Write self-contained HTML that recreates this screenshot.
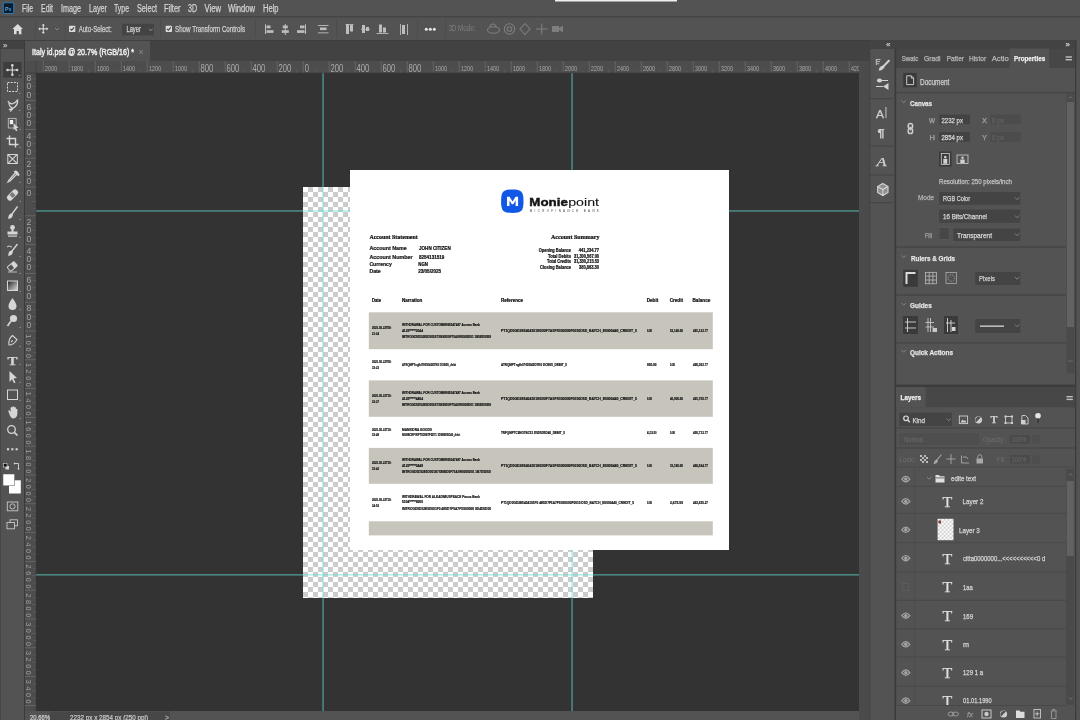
<!DOCTYPE html>
<html><head><meta charset="utf-8"><style>
html,body{margin:0;padding:0;width:1080px;height:720px;overflow:hidden;background:#535353}
svg{display:block;filter:blur(0.35px)}
text{font-family:"Liberation Sans",sans-serif}
</style></head><body>
<svg width="1080" height="720" viewBox="0 0 1080 720">
<rect x="0" y="0" width="1080" height="720" fill="#535353" />
<rect x="0" y="0" width="1080" height="16" fill="#535353" />
<rect x="0" y="16" width="1080" height="1.5" fill="#454545" />
<rect x="555" y="0" width="122" height="1.5" fill="#f0f0f0" />
<rect x="3.2" y="2.7" width="10.6" height="10.8" rx="1.5" fill="#0b1d2c" stroke="#2f79b5" stroke-width="1.1"/>
<text x="5" y="10.8" font-size="6" fill="#4fa6e8" textLength="6.6" lengthAdjust="spacingAndGlyphs" font-weight="bold" >Ps</text>
<text x="22" y="12" font-size="10" fill="#d4d4d4" stroke="#d4d4d4" stroke-width="0.25" textLength="11" lengthAdjust="spacingAndGlyphs" >File</text>
<text x="41" y="12" font-size="10" fill="#d4d4d4" stroke="#d4d4d4" stroke-width="0.25" textLength="12" lengthAdjust="spacingAndGlyphs" >Edit</text>
<text x="61" y="12" font-size="10" fill="#d4d4d4" stroke="#d4d4d4" stroke-width="0.25" textLength="20" lengthAdjust="spacingAndGlyphs" >Image</text>
<text x="89" y="12" font-size="10" fill="#d4d4d4" stroke="#d4d4d4" stroke-width="0.25" textLength="18" lengthAdjust="spacingAndGlyphs" >Layer</text>
<text x="114" y="12" font-size="10" fill="#d4d4d4" stroke="#d4d4d4" stroke-width="0.25" textLength="15" lengthAdjust="spacingAndGlyphs" >Type</text>
<text x="137" y="12" font-size="10" fill="#d4d4d4" stroke="#d4d4d4" stroke-width="0.25" textLength="20" lengthAdjust="spacingAndGlyphs" >Select</text>
<text x="164" y="12" font-size="10" fill="#d4d4d4" stroke="#d4d4d4" stroke-width="0.25" textLength="16.5" lengthAdjust="spacingAndGlyphs" >Filter</text>
<text x="188" y="12" font-size="10" fill="#d4d4d4" stroke="#d4d4d4" stroke-width="0.25" textLength="9" lengthAdjust="spacingAndGlyphs" >3D</text>
<text x="204.5" y="12" font-size="10" fill="#d4d4d4" stroke="#d4d4d4" stroke-width="0.25" textLength="16.5" lengthAdjust="spacingAndGlyphs" >View</text>
<text x="228" y="12" font-size="10" fill="#d4d4d4" stroke="#d4d4d4" stroke-width="0.25" textLength="27" lengthAdjust="spacingAndGlyphs" >Window</text>
<text x="263" y="12" font-size="10" fill="#d4d4d4" stroke="#d4d4d4" stroke-width="0.25" textLength="15.5" lengthAdjust="spacingAndGlyphs" >Help</text>
<rect x="0" y="40" width="1080" height="21" fill="#424242" />
<rect x="25" y="40" width="125" height="21" fill="#535353" />
<text x="32" y="55" font-size="9.5" fill="#ececec" stroke="#ececec" stroke-width="0.5" textLength="102" lengthAdjust="spacingAndGlyphs" >Italy id.psd @ 20.7% (RGB/16) *</text>
<text x="138.5" y="54.5" font-size="9" fill="#8a8a8a" >×</text>
<rect x="25" y="61" width="834" height="12" fill="#4d4d4d" />
<rect x="25" y="73" width="11" height="638" fill="#4d4d4d" />
<rect x="36" y="73" width="823" height="638" fill="#333333" />
<rect x="859" y="61" width="11" height="659" fill="#4a4a4a" />
<rect x="25" y="711" width="834" height="9" fill="#535353" />
<rect x="0" y="40" width="24" height="680" fill="#535353" />
<rect x="0" y="40" width="24" height="9" fill="#424242" />
<rect x="24" y="40" width="1" height="680" fill="#3a3a3a" />
<rect x="0" y="49" width="1" height="671" fill="#464646" />
<rect x="870" y="40" width="25" height="9" fill="#424242" />
<rect x="870" y="49" width="25" height="671" fill="#535353" />
<rect x="895" y="40" width="185" height="9" fill="#424242" />
<rect x="895" y="49" width="1" height="671" fill="#3a3a3a" />
<rect x="1075" y="40" width="1" height="680" fill="#3a3a3a" />
<defs><pattern id="chk" x="303" y="187" width="10" height="10" patternUnits="userSpaceOnUse"><rect width="10" height="10" fill="#fff"/><rect x="5" y="0" width="5" height="5" fill="#cccccc"/><rect x="0" y="5" width="5" height="5" fill="#cccccc"/></pattern></defs>
<rect x="303" y="187" width="290" height="411" fill="url(#chk)" />
<rect x="322.4" y="73" width="1.3" height="638" fill="rgba(100,225,210,0.6)" />
<rect x="571.4" y="73" width="1.3" height="638" fill="rgba(100,225,210,0.6)" />
<rect x="36" y="210.3" width="823" height="1.3" fill="rgba(100,225,210,0.6)" />
<rect x="36" y="574.2" width="823" height="1.3" fill="rgba(100,225,210,0.6)" />
<rect x="350" y="170" width="379" height="380" fill="#ffffff" />
<path d="M17.7 24 L12.4 29 L14 29 L14 34.3 L16.6 34.3 L16.6 31 L18.8 31 L18.8 34.3 L21.4 34.3 L21.4 29 L23 29 Z" fill="#dcdcdc"/>
<rect x="35" y="19" width="1" height="19" fill="#4c4c4c" />
<g stroke="#dcdcdc" stroke-width="1.1" fill="none"><line x1="43.3" y1="24.5" x2="43.3" y2="33.2"/><line x1="39" y1="28.8" x2="47.6" y2="28.8"/></g>
<g fill="#dcdcdc"><path d="M43.3 23.8 l-1.6 1.8 h3.2z"/><path d="M43.3 33.8 l-1.6 -1.8 h3.2z"/><path d="M38.3 28.8 l1.8 -1.6 v3.2z"/><path d="M48.3 28.8 l-1.8 -1.6 v3.2z"/></g>
<path d="M55 28 L57 30 L59 28" stroke="#8c8c8c" stroke-width="0.9" fill="none"/>
<rect x="65" y="19" width="1" height="19" fill="#4c4c4c" />
<rect x="69" y="25.7" width="6.3" height="6.3" rx="0.8" fill="#dcdcdc"/>
<path d="M70.3 28.9 L71.7 30.299999999999997 L74.1 27.3" stroke="#3c3c3c" stroke-width="1.1" fill="none"/>
<text x="78.7" y="31.8" font-size="8.5" fill="#d0d0d0" stroke="#d0d0d0" stroke-width="0.25" textLength="33" lengthAdjust="spacingAndGlyphs" >Auto-Select:</text>
<rect x="122" y="23.7" width="32" height="11.7" fill="#444444" />
<text x="126.5" y="31.8" font-size="8.5" fill="#d8d8d8" stroke="#d8d8d8" stroke-width="0.25" textLength="14.3" lengthAdjust="spacingAndGlyphs" >Layer</text>
<path d="M149 28.8 L150.8 30.6 L152.6 28.8" stroke="#9a9a9a" stroke-width="0.9" fill="none"/>
<rect x="160" y="19" width="1" height="19" fill="#4c4c4c" />
<rect x="165.7" y="25.7" width="6.3" height="6.3" rx="0.8" fill="#dcdcdc"/>
<path d="M167.0 28.9 L168.39999999999998 30.299999999999997 L170.79999999999998 27.3" stroke="#3c3c3c" stroke-width="1.1" fill="none"/>
<text x="175" y="31.8" font-size="8.5" fill="#d0d0d0" stroke="#d0d0d0" stroke-width="0.25" textLength="70" lengthAdjust="spacingAndGlyphs" >Show Transform Controls</text>
<rect x="255" y="19" width="1" height="19" fill="#4c4c4c" />
<rect x="265" y="24.3" width="1" height="9.7" fill="#bdbdbd" />
<rect x="266.5" y="25.5" width="4" height="2.8" fill="#bdbdbd" />
<rect x="266.5" y="30.2" width="7" height="2.7" fill="#bdbdbd" />
<rect x="284.8" y="24" width="1" height="11" fill="#bdbdbd" />
<rect x="282.8" y="25.5" width="5" height="2.8" fill="#bdbdbd" />
<rect x="281.8" y="30.2" width="7" height="2.7" fill="#bdbdbd" />
<rect x="305" y="24.3" width="1" height="9.7" fill="#bdbdbd" />
<rect x="300" y="25.5" width="4.5" height="2.8" fill="#bdbdbd" />
<rect x="297" y="30.2" width="7.5" height="2.7" fill="#bdbdbd" />
<rect x="318" y="25" width="10.5" height="0.9" fill="#bdbdbd" />
<rect x="318" y="32.4" width="10.5" height="0.9" fill="#bdbdbd" />
<rect x="320" y="27.5" width="6.5" height="2.6" fill="#bdbdbd" />
<rect x="336" y="19" width="1" height="19" fill="#4c4c4c" />
<rect x="346" y="24" width="3" height="10" fill="#bdbdbd" />
<rect x="350" y="25" width="3" height="6.5" fill="#bdbdbd" />
<rect x="345.5" y="24" width="8" height="0.8" fill="#bdbdbd" />
<rect x="362" y="25" width="3" height="8" fill="#bdbdbd" />
<rect x="366" y="27" width="3" height="4" fill="#bdbdbd" />
<rect x="361" y="28.8" width="9" height="0.8" fill="#bdbdbd" />
<rect x="379" y="24.5" width="3" height="8" fill="#bdbdbd" />
<rect x="383" y="27.5" width="3" height="5" fill="#bdbdbd" />
<rect x="376.5" y="33" width="12" height="0.9" fill="#bdbdbd" />
<rect x="400" y="24" width="0.9" height="11" fill="#bdbdbd" />
<rect x="407" y="24" width="0.9" height="11" fill="#bdbdbd" />
<rect x="402" y="25" width="3" height="9" fill="#bdbdbd" />
<rect x="417" y="19" width="1" height="19" fill="#4c4c4c" />
<circle cx="426.3" cy="29.3" r="1.5" fill="#e8e8e8"/>
<circle cx="430.3" cy="29.3" r="1.5" fill="#e8e8e8"/>
<circle cx="434.3" cy="29.3" r="1.5" fill="#e8e8e8"/>
<rect x="445" y="19" width="1" height="19" fill="#4c4c4c" />
<text x="448.4" y="31.2" font-size="8.5" fill="#7e7e7e" textLength="27" lengthAdjust="spacingAndGlyphs" >3D Mode:</text>
<g stroke="#7e7e7e" stroke-width="1.1" fill="none"><ellipse cx="493.5" cy="30" rx="6" ry="3.2"/><path d="M490 27 a3 3 0 0 1 6 0"/><circle cx="509.5" cy="29" r="5.2"/><circle cx="509.5" cy="29" r="2.3"/><path d="M525 23.5 L530 29 L525 34.5 L520 29 Z"/><line x1="541.7" y1="23.5" x2="541.7" y2="34.5"/><line x1="536" y1="29" x2="547.5" y2="29"/></g>
<path d="M552 26 h7 v6 h-7 z M559 28 l4 -2.5 v7 l-4 -2.5z" fill="#7e7e7e"/>
<rect x="0" y="40" width="1080" height="0.8" fill="#3c3c3c" />
<rect x="42.80000000000001" y="61" width="0.8" height="12" fill="#6a6a6a" />
<rect x="49.40000000000001" y="70.5" width="0.7" height="2.5" fill="#626262" />
<rect x="55.90000000000001" y="69" width="0.7" height="4" fill="#626262" />
<rect x="62.40000000000001" y="70.5" width="0.7" height="2.5" fill="#626262" />
<text x="44.90000000000001" y="70.6" font-size="7.2" fill="#aaaaaa" textLength="12" lengthAdjust="spacingAndGlyphs" >2000</text>
<rect x="68.80000000000001" y="61" width="0.8" height="12" fill="#6a6a6a" />
<rect x="75.4" y="70.5" width="0.7" height="2.5" fill="#626262" />
<rect x="81.9" y="69" width="0.7" height="4" fill="#626262" />
<rect x="88.4" y="70.5" width="0.7" height="2.5" fill="#626262" />
<text x="70.9" y="70.6" font-size="7.2" fill="#aaaaaa" textLength="12" lengthAdjust="spacingAndGlyphs" >1800</text>
<rect x="94.80000000000001" y="61" width="0.8" height="12" fill="#6a6a6a" />
<rect x="101.4" y="70.5" width="0.7" height="2.5" fill="#626262" />
<rect x="107.9" y="69" width="0.7" height="4" fill="#626262" />
<rect x="114.4" y="70.5" width="0.7" height="2.5" fill="#626262" />
<text x="96.9" y="70.6" font-size="7.2" fill="#aaaaaa" textLength="12" lengthAdjust="spacingAndGlyphs" >1600</text>
<rect x="120.80000000000001" y="61" width="0.8" height="12" fill="#6a6a6a" />
<rect x="127.4" y="70.5" width="0.7" height="2.5" fill="#626262" />
<rect x="133.9" y="69" width="0.7" height="4" fill="#626262" />
<rect x="140.4" y="70.5" width="0.7" height="2.5" fill="#626262" />
<text x="122.9" y="70.6" font-size="7.2" fill="#aaaaaa" textLength="12" lengthAdjust="spacingAndGlyphs" >1400</text>
<rect x="146.8" y="61" width="0.8" height="12" fill="#6a6a6a" />
<rect x="153.4" y="70.5" width="0.7" height="2.5" fill="#626262" />
<rect x="159.9" y="69" width="0.7" height="4" fill="#626262" />
<rect x="166.4" y="70.5" width="0.7" height="2.5" fill="#626262" />
<text x="148.9" y="70.6" font-size="7.2" fill="#aaaaaa" textLength="12" lengthAdjust="spacingAndGlyphs" >1200</text>
<rect x="172.8" y="61" width="0.8" height="12" fill="#6a6a6a" />
<rect x="179.4" y="70.5" width="0.7" height="2.5" fill="#626262" />
<rect x="185.9" y="69" width="0.7" height="4" fill="#626262" />
<rect x="192.4" y="70.5" width="0.7" height="2.5" fill="#626262" />
<text x="174.9" y="70.6" font-size="7.2" fill="#aaaaaa" textLength="12" lengthAdjust="spacingAndGlyphs" >1000</text>
<rect x="198.8" y="61" width="0.8" height="12" fill="#6a6a6a" />
<rect x="205.4" y="70.5" width="0.7" height="2.5" fill="#626262" />
<rect x="211.9" y="69" width="0.7" height="4" fill="#626262" />
<rect x="218.4" y="70.5" width="0.7" height="2.5" fill="#626262" />
<text x="200.5" y="71.5" font-size="10" fill="#aaaaaa" textLength="12.8" lengthAdjust="spacingAndGlyphs" >800</text>
<rect x="224.8" y="61" width="0.8" height="12" fill="#6a6a6a" />
<rect x="231.4" y="70.5" width="0.7" height="2.5" fill="#626262" />
<rect x="237.9" y="69" width="0.7" height="4" fill="#626262" />
<rect x="244.4" y="70.5" width="0.7" height="2.5" fill="#626262" />
<text x="226.5" y="71.5" font-size="10" fill="#aaaaaa" textLength="12.8" lengthAdjust="spacingAndGlyphs" >600</text>
<rect x="250.8" y="61" width="0.8" height="12" fill="#6a6a6a" />
<rect x="257.40000000000003" y="70.5" width="0.7" height="2.5" fill="#626262" />
<rect x="263.90000000000003" y="69" width="0.7" height="4" fill="#626262" />
<rect x="270.40000000000003" y="70.5" width="0.7" height="2.5" fill="#626262" />
<text x="252.5" y="71.5" font-size="10" fill="#aaaaaa" textLength="12.8" lengthAdjust="spacingAndGlyphs" >400</text>
<rect x="276.8" y="61" width="0.8" height="12" fill="#6a6a6a" />
<rect x="283.40000000000003" y="70.5" width="0.7" height="2.5" fill="#626262" />
<rect x="289.90000000000003" y="69" width="0.7" height="4" fill="#626262" />
<rect x="296.40000000000003" y="70.5" width="0.7" height="2.5" fill="#626262" />
<text x="278.5" y="71.5" font-size="10" fill="#aaaaaa" textLength="12.8" lengthAdjust="spacingAndGlyphs" >200</text>
<rect x="302.8" y="61" width="0.8" height="12" fill="#6a6a6a" />
<rect x="309.40000000000003" y="70.5" width="0.7" height="2.5" fill="#626262" />
<rect x="315.90000000000003" y="69" width="0.7" height="4" fill="#626262" />
<rect x="322.40000000000003" y="70.5" width="0.7" height="2.5" fill="#626262" />
<text x="304.8" y="71.5" font-size="10" fill="#aaaaaa" textLength="4.2" lengthAdjust="spacingAndGlyphs" >0</text>
<rect x="328.8" y="61" width="0.8" height="12" fill="#6a6a6a" />
<rect x="335.40000000000003" y="70.5" width="0.7" height="2.5" fill="#626262" />
<rect x="341.90000000000003" y="69" width="0.7" height="4" fill="#626262" />
<rect x="348.40000000000003" y="70.5" width="0.7" height="2.5" fill="#626262" />
<text x="330.5" y="71.5" font-size="10" fill="#aaaaaa" textLength="12.8" lengthAdjust="spacingAndGlyphs" >200</text>
<rect x="354.8" y="61" width="0.8" height="12" fill="#6a6a6a" />
<rect x="361.40000000000003" y="70.5" width="0.7" height="2.5" fill="#626262" />
<rect x="367.90000000000003" y="69" width="0.7" height="4" fill="#626262" />
<rect x="374.40000000000003" y="70.5" width="0.7" height="2.5" fill="#626262" />
<text x="356.5" y="71.5" font-size="10" fill="#aaaaaa" textLength="12.8" lengthAdjust="spacingAndGlyphs" >400</text>
<rect x="380.8" y="61" width="0.8" height="12" fill="#6a6a6a" />
<rect x="387.40000000000003" y="70.5" width="0.7" height="2.5" fill="#626262" />
<rect x="393.90000000000003" y="69" width="0.7" height="4" fill="#626262" />
<rect x="400.40000000000003" y="70.5" width="0.7" height="2.5" fill="#626262" />
<text x="382.5" y="71.5" font-size="10" fill="#aaaaaa" textLength="12.8" lengthAdjust="spacingAndGlyphs" >600</text>
<rect x="406.8" y="61" width="0.8" height="12" fill="#6a6a6a" />
<rect x="413.40000000000003" y="70.5" width="0.7" height="2.5" fill="#626262" />
<rect x="419.90000000000003" y="69" width="0.7" height="4" fill="#626262" />
<rect x="426.40000000000003" y="70.5" width="0.7" height="2.5" fill="#626262" />
<text x="408.5" y="71.5" font-size="10" fill="#aaaaaa" textLength="12.8" lengthAdjust="spacingAndGlyphs" >800</text>
<rect x="432.8" y="61" width="0.8" height="12" fill="#6a6a6a" />
<rect x="439.40000000000003" y="70.5" width="0.7" height="2.5" fill="#626262" />
<rect x="445.90000000000003" y="69" width="0.7" height="4" fill="#626262" />
<rect x="452.40000000000003" y="70.5" width="0.7" height="2.5" fill="#626262" />
<text x="434.90000000000003" y="70.6" font-size="7.2" fill="#aaaaaa" textLength="12" lengthAdjust="spacingAndGlyphs" >1000</text>
<rect x="458.8" y="61" width="0.8" height="12" fill="#6a6a6a" />
<rect x="465.40000000000003" y="70.5" width="0.7" height="2.5" fill="#626262" />
<rect x="471.90000000000003" y="69" width="0.7" height="4" fill="#626262" />
<rect x="478.40000000000003" y="70.5" width="0.7" height="2.5" fill="#626262" />
<text x="460.90000000000003" y="70.6" font-size="7.2" fill="#aaaaaa" textLength="12" lengthAdjust="spacingAndGlyphs" >1200</text>
<rect x="484.8" y="61" width="0.8" height="12" fill="#6a6a6a" />
<rect x="491.40000000000003" y="70.5" width="0.7" height="2.5" fill="#626262" />
<rect x="497.90000000000003" y="69" width="0.7" height="4" fill="#626262" />
<rect x="504.40000000000003" y="70.5" width="0.7" height="2.5" fill="#626262" />
<text x="486.90000000000003" y="70.6" font-size="7.2" fill="#aaaaaa" textLength="12" lengthAdjust="spacingAndGlyphs" >1400</text>
<rect x="510.8" y="61" width="0.8" height="12" fill="#6a6a6a" />
<rect x="517.4" y="70.5" width="0.7" height="2.5" fill="#626262" />
<rect x="523.9" y="69" width="0.7" height="4" fill="#626262" />
<rect x="530.4" y="70.5" width="0.7" height="2.5" fill="#626262" />
<text x="512.9" y="70.6" font-size="7.2" fill="#aaaaaa" textLength="12" lengthAdjust="spacingAndGlyphs" >1600</text>
<rect x="536.8" y="61" width="0.8" height="12" fill="#6a6a6a" />
<rect x="543.4" y="70.5" width="0.7" height="2.5" fill="#626262" />
<rect x="549.9" y="69" width="0.7" height="4" fill="#626262" />
<rect x="556.4" y="70.5" width="0.7" height="2.5" fill="#626262" />
<text x="538.9" y="70.6" font-size="7.2" fill="#aaaaaa" textLength="12" lengthAdjust="spacingAndGlyphs" >1800</text>
<rect x="562.8" y="61" width="0.8" height="12" fill="#6a6a6a" />
<rect x="569.4" y="70.5" width="0.7" height="2.5" fill="#626262" />
<rect x="575.9" y="69" width="0.7" height="4" fill="#626262" />
<rect x="582.4" y="70.5" width="0.7" height="2.5" fill="#626262" />
<text x="564.9" y="70.6" font-size="7.2" fill="#aaaaaa" textLength="12" lengthAdjust="spacingAndGlyphs" >2000</text>
<rect x="588.8" y="61" width="0.8" height="12" fill="#6a6a6a" />
<rect x="595.4" y="70.5" width="0.7" height="2.5" fill="#626262" />
<rect x="601.9" y="69" width="0.7" height="4" fill="#626262" />
<rect x="608.4" y="70.5" width="0.7" height="2.5" fill="#626262" />
<text x="590.9" y="70.6" font-size="7.2" fill="#aaaaaa" textLength="12" lengthAdjust="spacingAndGlyphs" >2200</text>
<rect x="614.8" y="61" width="0.8" height="12" fill="#6a6a6a" />
<rect x="621.4" y="70.5" width="0.7" height="2.5" fill="#626262" />
<rect x="627.9" y="69" width="0.7" height="4" fill="#626262" />
<rect x="634.4" y="70.5" width="0.7" height="2.5" fill="#626262" />
<text x="616.9" y="70.6" font-size="7.2" fill="#aaaaaa" textLength="12" lengthAdjust="spacingAndGlyphs" >2400</text>
<rect x="640.8" y="61" width="0.8" height="12" fill="#6a6a6a" />
<rect x="647.4" y="70.5" width="0.7" height="2.5" fill="#626262" />
<rect x="653.9" y="69" width="0.7" height="4" fill="#626262" />
<rect x="660.4" y="70.5" width="0.7" height="2.5" fill="#626262" />
<text x="642.9" y="70.6" font-size="7.2" fill="#aaaaaa" textLength="12" lengthAdjust="spacingAndGlyphs" >2600</text>
<rect x="666.8" y="61" width="0.8" height="12" fill="#6a6a6a" />
<rect x="673.4" y="70.5" width="0.7" height="2.5" fill="#626262" />
<rect x="679.9" y="69" width="0.7" height="4" fill="#626262" />
<rect x="686.4" y="70.5" width="0.7" height="2.5" fill="#626262" />
<text x="668.9" y="70.6" font-size="7.2" fill="#aaaaaa" textLength="12" lengthAdjust="spacingAndGlyphs" >2800</text>
<rect x="692.8" y="61" width="0.8" height="12" fill="#6a6a6a" />
<rect x="699.4" y="70.5" width="0.7" height="2.5" fill="#626262" />
<rect x="705.9" y="69" width="0.7" height="4" fill="#626262" />
<rect x="712.4" y="70.5" width="0.7" height="2.5" fill="#626262" />
<text x="694.9" y="70.6" font-size="7.2" fill="#aaaaaa" textLength="12" lengthAdjust="spacingAndGlyphs" >3000</text>
<rect x="718.8" y="61" width="0.8" height="12" fill="#6a6a6a" />
<rect x="725.4" y="70.5" width="0.7" height="2.5" fill="#626262" />
<rect x="731.9" y="69" width="0.7" height="4" fill="#626262" />
<rect x="738.4" y="70.5" width="0.7" height="2.5" fill="#626262" />
<text x="720.9" y="70.6" font-size="7.2" fill="#aaaaaa" textLength="12" lengthAdjust="spacingAndGlyphs" >3200</text>
<rect x="744.8" y="61" width="0.8" height="12" fill="#6a6a6a" />
<rect x="751.4" y="70.5" width="0.7" height="2.5" fill="#626262" />
<rect x="757.9" y="69" width="0.7" height="4" fill="#626262" />
<rect x="764.4" y="70.5" width="0.7" height="2.5" fill="#626262" />
<text x="746.9" y="70.6" font-size="7.2" fill="#aaaaaa" textLength="12" lengthAdjust="spacingAndGlyphs" >3400</text>
<rect x="770.8" y="61" width="0.8" height="12" fill="#6a6a6a" />
<rect x="777.4" y="70.5" width="0.7" height="2.5" fill="#626262" />
<rect x="783.9" y="69" width="0.7" height="4" fill="#626262" />
<rect x="790.4" y="70.5" width="0.7" height="2.5" fill="#626262" />
<text x="772.9" y="70.6" font-size="7.2" fill="#aaaaaa" textLength="12" lengthAdjust="spacingAndGlyphs" >3600</text>
<rect x="796.8" y="61" width="0.8" height="12" fill="#6a6a6a" />
<rect x="803.4" y="70.5" width="0.7" height="2.5" fill="#626262" />
<rect x="809.9" y="69" width="0.7" height="4" fill="#626262" />
<rect x="816.4" y="70.5" width="0.7" height="2.5" fill="#626262" />
<text x="798.9" y="70.6" font-size="7.2" fill="#aaaaaa" textLength="12" lengthAdjust="spacingAndGlyphs" >3800</text>
<rect x="822.8" y="61" width="0.8" height="12" fill="#6a6a6a" />
<rect x="829.4" y="70.5" width="0.7" height="2.5" fill="#626262" />
<rect x="835.9" y="69" width="0.7" height="4" fill="#626262" />
<rect x="842.4" y="70.5" width="0.7" height="2.5" fill="#626262" />
<text x="824.9" y="70.6" font-size="7.2" fill="#aaaaaa" textLength="12" lengthAdjust="spacingAndGlyphs" >4000</text>
<rect x="848.8" y="61" width="0.8" height="12" fill="#6a6a6a" />
<rect x="855.4" y="70.5" width="0.7" height="2.5" fill="#626262" />
<text x="850.9" y="70.6" font-size="7.2" fill="#aaaaaa" textLength="12" lengthAdjust="spacingAndGlyphs" >4200</text>
<rect x="25" y="72.6" width="834" height="0.6" fill="#3e3e3e" />
<rect x="35.6" y="61" width="0.6" height="650" fill="#3e3e3e" />
<rect x="33.5" y="78.65" width="2.5" height="0.7" fill="#626262" />
<rect x="32" y="85.85000000000001" width="4" height="0.7" fill="#626262" />
<rect x="33.5" y="93.05000000000001" width="2.5" height="0.7" fill="#626262" />
<text x="26.4" y="81.0" font-size="8.4" fill="#a6a6a6" textLength="4.8" lengthAdjust="spacingAndGlyphs" >8</text>
<text x="26.4" y="89.3" font-size="8.4" fill="#a6a6a6" textLength="4.8" lengthAdjust="spacingAndGlyphs" >0</text>
<text x="26.4" y="97.6" font-size="8.4" fill="#a6a6a6" textLength="4.8" lengthAdjust="spacingAndGlyphs" >0</text>
<rect x="25" y="100.19999999999999" width="11" height="0.8" fill="#6a6a6a" />
<rect x="33.5" y="107.45" width="2.5" height="0.7" fill="#626262" />
<rect x="32" y="114.65" width="4" height="0.7" fill="#626262" />
<rect x="33.5" y="121.85" width="2.5" height="0.7" fill="#626262" />
<text x="26.4" y="109.8" font-size="8.4" fill="#a6a6a6" textLength="4.8" lengthAdjust="spacingAndGlyphs" >6</text>
<text x="26.4" y="118.1" font-size="8.4" fill="#a6a6a6" textLength="4.8" lengthAdjust="spacingAndGlyphs" >0</text>
<text x="26.4" y="126.4" font-size="8.4" fill="#a6a6a6" textLength="4.8" lengthAdjust="spacingAndGlyphs" >0</text>
<rect x="25" y="129.0" width="11" height="0.8" fill="#6a6a6a" />
<rect x="33.5" y="136.25" width="2.5" height="0.7" fill="#626262" />
<rect x="32" y="143.45000000000002" width="4" height="0.7" fill="#626262" />
<rect x="33.5" y="150.65" width="2.5" height="0.7" fill="#626262" />
<text x="26.4" y="138.6" font-size="8.4" fill="#a6a6a6" textLength="4.8" lengthAdjust="spacingAndGlyphs" >4</text>
<text x="26.4" y="146.9" font-size="8.4" fill="#a6a6a6" textLength="4.8" lengthAdjust="spacingAndGlyphs" >0</text>
<text x="26.4" y="155.2" font-size="8.4" fill="#a6a6a6" textLength="4.8" lengthAdjust="spacingAndGlyphs" >0</text>
<rect x="25" y="157.79999999999998" width="11" height="0.8" fill="#6a6a6a" />
<rect x="33.5" y="165.04999999999998" width="2.5" height="0.7" fill="#626262" />
<rect x="32" y="172.25" width="4" height="0.7" fill="#626262" />
<rect x="33.5" y="179.45" width="2.5" height="0.7" fill="#626262" />
<text x="26.4" y="167.39999999999998" font-size="8.4" fill="#a6a6a6" textLength="4.8" lengthAdjust="spacingAndGlyphs" >2</text>
<text x="26.4" y="175.7" font-size="8.4" fill="#a6a6a6" textLength="4.8" lengthAdjust="spacingAndGlyphs" >0</text>
<text x="26.4" y="183.99999999999997" font-size="8.4" fill="#a6a6a6" textLength="4.8" lengthAdjust="spacingAndGlyphs" >0</text>
<rect x="25" y="186.6" width="11" height="0.8" fill="#6a6a6a" />
<rect x="33.5" y="193.85" width="2.5" height="0.7" fill="#626262" />
<rect x="32" y="201.05" width="4" height="0.7" fill="#626262" />
<rect x="33.5" y="208.25" width="2.5" height="0.7" fill="#626262" />
<text x="26.4" y="196.2" font-size="8.4" fill="#a6a6a6" textLength="4.8" lengthAdjust="spacingAndGlyphs" >0</text>
<rect x="25" y="215.4" width="11" height="0.8" fill="#6a6a6a" />
<rect x="33.5" y="222.65" width="2.5" height="0.7" fill="#626262" />
<rect x="32" y="229.85000000000002" width="4" height="0.7" fill="#626262" />
<rect x="33.5" y="237.05" width="2.5" height="0.7" fill="#626262" />
<text x="26.4" y="225.0" font-size="8.4" fill="#a6a6a6" textLength="4.8" lengthAdjust="spacingAndGlyphs" >2</text>
<text x="26.4" y="233.3" font-size="8.4" fill="#a6a6a6" textLength="4.8" lengthAdjust="spacingAndGlyphs" >0</text>
<text x="26.4" y="241.6" font-size="8.4" fill="#a6a6a6" textLength="4.8" lengthAdjust="spacingAndGlyphs" >0</text>
<rect x="25" y="244.2" width="11" height="0.8" fill="#6a6a6a" />
<rect x="33.5" y="251.45" width="2.5" height="0.7" fill="#626262" />
<rect x="32" y="258.65" width="4" height="0.7" fill="#626262" />
<rect x="33.5" y="265.84999999999997" width="2.5" height="0.7" fill="#626262" />
<text x="26.4" y="253.79999999999998" font-size="8.4" fill="#a6a6a6" textLength="4.8" lengthAdjust="spacingAndGlyphs" >4</text>
<text x="26.4" y="262.09999999999997" font-size="8.4" fill="#a6a6a6" textLength="4.8" lengthAdjust="spacingAndGlyphs" >0</text>
<text x="26.4" y="270.4" font-size="8.4" fill="#a6a6a6" textLength="4.8" lengthAdjust="spacingAndGlyphs" >0</text>
<rect x="25" y="273.0" width="11" height="0.8" fill="#6a6a6a" />
<rect x="33.5" y="280.24999999999994" width="2.5" height="0.7" fill="#626262" />
<rect x="32" y="287.44999999999993" width="4" height="0.7" fill="#626262" />
<rect x="33.5" y="294.65" width="2.5" height="0.7" fill="#626262" />
<text x="26.4" y="282.59999999999997" font-size="8.4" fill="#a6a6a6" textLength="4.8" lengthAdjust="spacingAndGlyphs" >6</text>
<text x="26.4" y="290.9" font-size="8.4" fill="#a6a6a6" textLength="4.8" lengthAdjust="spacingAndGlyphs" >0</text>
<text x="26.4" y="299.2" font-size="8.4" fill="#a6a6a6" textLength="4.8" lengthAdjust="spacingAndGlyphs" >0</text>
<rect x="25" y="301.8" width="11" height="0.8" fill="#6a6a6a" />
<rect x="33.5" y="309.04999999999995" width="2.5" height="0.7" fill="#626262" />
<rect x="32" y="316.24999999999994" width="4" height="0.7" fill="#626262" />
<rect x="33.5" y="323.45" width="2.5" height="0.7" fill="#626262" />
<text x="26.4" y="311.4" font-size="8.4" fill="#a6a6a6" textLength="4.8" lengthAdjust="spacingAndGlyphs" >8</text>
<text x="26.4" y="319.7" font-size="8.4" fill="#a6a6a6" textLength="4.8" lengthAdjust="spacingAndGlyphs" >0</text>
<text x="26.4" y="328.0" font-size="8.4" fill="#a6a6a6" textLength="4.8" lengthAdjust="spacingAndGlyphs" >0</text>
<rect x="25" y="330.6" width="11" height="0.8" fill="#6a6a6a" />
<rect x="33.5" y="337.84999999999997" width="2.5" height="0.7" fill="#626262" />
<rect x="32" y="345.04999999999995" width="4" height="0.7" fill="#626262" />
<rect x="33.5" y="352.25" width="2.5" height="0.7" fill="#626262" />
<text x="26.2" y="338.70000000000005" font-size="6.8" fill="#a0a0a0" textLength="4.0" lengthAdjust="spacingAndGlyphs" transform="rotate(90 28.2 336.20)">1</text>
<text x="26.2" y="345.30000000000007" font-size="6.8" fill="#a0a0a0" textLength="4.0" lengthAdjust="spacingAndGlyphs" transform="rotate(90 28.2 342.80)">0</text>
<text x="26.2" y="351.90000000000003" font-size="6.8" fill="#a0a0a0" textLength="4.0" lengthAdjust="spacingAndGlyphs" transform="rotate(90 28.2 349.40)">0</text>
<text x="26.2" y="358.50000000000006" font-size="6.8" fill="#a0a0a0" textLength="4.0" lengthAdjust="spacingAndGlyphs" transform="rotate(90 28.2 356.00)">0</text>
<rect x="25" y="359.40000000000003" width="11" height="0.8" fill="#6a6a6a" />
<rect x="33.5" y="366.65" width="2.5" height="0.7" fill="#626262" />
<rect x="32" y="373.84999999999997" width="4" height="0.7" fill="#626262" />
<rect x="33.5" y="381.05" width="2.5" height="0.7" fill="#626262" />
<text x="26.2" y="367.50000000000006" font-size="6.8" fill="#a0a0a0" textLength="4.0" lengthAdjust="spacingAndGlyphs" transform="rotate(90 28.2 365.00)">1</text>
<text x="26.2" y="374.1000000000001" font-size="6.8" fill="#a0a0a0" textLength="4.0" lengthAdjust="spacingAndGlyphs" transform="rotate(90 28.2 371.60)">2</text>
<text x="26.2" y="380.70000000000005" font-size="6.8" fill="#a0a0a0" textLength="4.0" lengthAdjust="spacingAndGlyphs" transform="rotate(90 28.2 378.20)">0</text>
<text x="26.2" y="387.30000000000007" font-size="6.8" fill="#a0a0a0" textLength="4.0" lengthAdjust="spacingAndGlyphs" transform="rotate(90 28.2 384.80)">0</text>
<rect x="25" y="388.20000000000005" width="11" height="0.8" fill="#6a6a6a" />
<rect x="33.5" y="395.45" width="2.5" height="0.7" fill="#626262" />
<rect x="32" y="402.65" width="4" height="0.7" fill="#626262" />
<rect x="33.5" y="409.85" width="2.5" height="0.7" fill="#626262" />
<text x="26.2" y="396.30000000000007" font-size="6.8" fill="#a0a0a0" textLength="4.0" lengthAdjust="spacingAndGlyphs" transform="rotate(90 28.2 393.80)">1</text>
<text x="26.2" y="402.9000000000001" font-size="6.8" fill="#a0a0a0" textLength="4.0" lengthAdjust="spacingAndGlyphs" transform="rotate(90 28.2 400.40)">4</text>
<text x="26.2" y="409.50000000000006" font-size="6.8" fill="#a0a0a0" textLength="4.0" lengthAdjust="spacingAndGlyphs" transform="rotate(90 28.2 407.00)">0</text>
<text x="26.2" y="416.1000000000001" font-size="6.8" fill="#a0a0a0" textLength="4.0" lengthAdjust="spacingAndGlyphs" transform="rotate(90 28.2 413.60)">0</text>
<rect x="25" y="417.0" width="11" height="0.8" fill="#6a6a6a" />
<rect x="33.5" y="424.24999999999994" width="2.5" height="0.7" fill="#626262" />
<rect x="32" y="431.44999999999993" width="4" height="0.7" fill="#626262" />
<rect x="33.5" y="438.65" width="2.5" height="0.7" fill="#626262" />
<text x="26.2" y="425.1" font-size="6.8" fill="#a0a0a0" textLength="4.0" lengthAdjust="spacingAndGlyphs" transform="rotate(90 28.2 422.60)">1</text>
<text x="26.2" y="431.70000000000005" font-size="6.8" fill="#a0a0a0" textLength="4.0" lengthAdjust="spacingAndGlyphs" transform="rotate(90 28.2 429.20)">6</text>
<text x="26.2" y="438.3" font-size="6.8" fill="#a0a0a0" textLength="4.0" lengthAdjust="spacingAndGlyphs" transform="rotate(90 28.2 435.80)">0</text>
<text x="26.2" y="444.90000000000003" font-size="6.8" fill="#a0a0a0" textLength="4.0" lengthAdjust="spacingAndGlyphs" transform="rotate(90 28.2 442.40)">0</text>
<rect x="25" y="445.8" width="11" height="0.8" fill="#6a6a6a" />
<rect x="33.5" y="453.04999999999995" width="2.5" height="0.7" fill="#626262" />
<rect x="32" y="460.24999999999994" width="4" height="0.7" fill="#626262" />
<rect x="33.5" y="467.45" width="2.5" height="0.7" fill="#626262" />
<text x="26.2" y="453.90000000000003" font-size="6.8" fill="#a0a0a0" textLength="4.0" lengthAdjust="spacingAndGlyphs" transform="rotate(90 28.2 451.40)">1</text>
<text x="26.2" y="460.50000000000006" font-size="6.8" fill="#a0a0a0" textLength="4.0" lengthAdjust="spacingAndGlyphs" transform="rotate(90 28.2 458.00)">8</text>
<text x="26.2" y="467.1" font-size="6.8" fill="#a0a0a0" textLength="4.0" lengthAdjust="spacingAndGlyphs" transform="rotate(90 28.2 464.60)">0</text>
<text x="26.2" y="473.70000000000005" font-size="6.8" fill="#a0a0a0" textLength="4.0" lengthAdjust="spacingAndGlyphs" transform="rotate(90 28.2 471.20)">0</text>
<rect x="25" y="474.6" width="11" height="0.8" fill="#6a6a6a" />
<rect x="33.5" y="481.84999999999997" width="2.5" height="0.7" fill="#626262" />
<rect x="32" y="489.04999999999995" width="4" height="0.7" fill="#626262" />
<rect x="33.5" y="496.25" width="2.5" height="0.7" fill="#626262" />
<text x="26.2" y="482.70000000000005" font-size="6.8" fill="#a0a0a0" textLength="4.0" lengthAdjust="spacingAndGlyphs" transform="rotate(90 28.2 480.20)">2</text>
<text x="26.2" y="489.30000000000007" font-size="6.8" fill="#a0a0a0" textLength="4.0" lengthAdjust="spacingAndGlyphs" transform="rotate(90 28.2 486.80)">0</text>
<text x="26.2" y="495.90000000000003" font-size="6.8" fill="#a0a0a0" textLength="4.0" lengthAdjust="spacingAndGlyphs" transform="rotate(90 28.2 493.40)">0</text>
<text x="26.2" y="502.50000000000006" font-size="6.8" fill="#a0a0a0" textLength="4.0" lengthAdjust="spacingAndGlyphs" transform="rotate(90 28.2 500.00)">0</text>
<rect x="25" y="503.40000000000003" width="11" height="0.8" fill="#6a6a6a" />
<rect x="33.5" y="510.65" width="2.5" height="0.7" fill="#626262" />
<rect x="32" y="517.85" width="4" height="0.7" fill="#626262" />
<rect x="33.5" y="525.05" width="2.5" height="0.7" fill="#626262" />
<text x="26.2" y="511.50000000000006" font-size="6.8" fill="#a0a0a0" textLength="4.0" lengthAdjust="spacingAndGlyphs" transform="rotate(90 28.2 509.00)">2</text>
<text x="26.2" y="518.1" font-size="6.8" fill="#a0a0a0" textLength="4.0" lengthAdjust="spacingAndGlyphs" transform="rotate(90 28.2 515.60)">2</text>
<text x="26.2" y="524.7" font-size="6.8" fill="#a0a0a0" textLength="4.0" lengthAdjust="spacingAndGlyphs" transform="rotate(90 28.2 522.20)">0</text>
<text x="26.2" y="531.3000000000001" font-size="6.8" fill="#a0a0a0" textLength="4.0" lengthAdjust="spacingAndGlyphs" transform="rotate(90 28.2 528.80)">0</text>
<rect x="25" y="532.2" width="11" height="0.8" fill="#6a6a6a" />
<rect x="33.5" y="539.45" width="2.5" height="0.7" fill="#626262" />
<rect x="32" y="546.65" width="4" height="0.7" fill="#626262" />
<rect x="33.5" y="553.85" width="2.5" height="0.7" fill="#626262" />
<text x="26.2" y="540.3000000000001" font-size="6.8" fill="#a0a0a0" textLength="4.0" lengthAdjust="spacingAndGlyphs" transform="rotate(90 28.2 537.80)">2</text>
<text x="26.2" y="546.9000000000001" font-size="6.8" fill="#a0a0a0" textLength="4.0" lengthAdjust="spacingAndGlyphs" transform="rotate(90 28.2 544.40)">4</text>
<text x="26.2" y="553.5000000000001" font-size="6.8" fill="#a0a0a0" textLength="4.0" lengthAdjust="spacingAndGlyphs" transform="rotate(90 28.2 551.00)">0</text>
<text x="26.2" y="560.1" font-size="6.8" fill="#a0a0a0" textLength="4.0" lengthAdjust="spacingAndGlyphs" transform="rotate(90 28.2 557.60)">0</text>
<rect x="25" y="561.0000000000001" width="11" height="0.8" fill="#6a6a6a" />
<rect x="33.5" y="568.2500000000001" width="2.5" height="0.7" fill="#626262" />
<rect x="32" y="575.45" width="4" height="0.7" fill="#626262" />
<rect x="33.5" y="582.6500000000001" width="2.5" height="0.7" fill="#626262" />
<text x="26.2" y="569.1000000000001" font-size="6.8" fill="#a0a0a0" textLength="4.0" lengthAdjust="spacingAndGlyphs" transform="rotate(90 28.2 566.60)">2</text>
<text x="26.2" y="575.7000000000002" font-size="6.8" fill="#a0a0a0" textLength="4.0" lengthAdjust="spacingAndGlyphs" transform="rotate(90 28.2 573.20)">6</text>
<text x="26.2" y="582.3000000000002" font-size="6.8" fill="#a0a0a0" textLength="4.0" lengthAdjust="spacingAndGlyphs" transform="rotate(90 28.2 579.80)">0</text>
<text x="26.2" y="588.9000000000001" font-size="6.8" fill="#a0a0a0" textLength="4.0" lengthAdjust="spacingAndGlyphs" transform="rotate(90 28.2 586.40)">0</text>
<rect x="25" y="589.8000000000001" width="11" height="0.8" fill="#6a6a6a" />
<rect x="33.5" y="597.0500000000001" width="2.5" height="0.7" fill="#626262" />
<rect x="32" y="604.25" width="4" height="0.7" fill="#626262" />
<rect x="33.5" y="611.45" width="2.5" height="0.7" fill="#626262" />
<text x="26.2" y="597.9000000000001" font-size="6.8" fill="#a0a0a0" textLength="4.0" lengthAdjust="spacingAndGlyphs" transform="rotate(90 28.2 595.40)">2</text>
<text x="26.2" y="604.5000000000001" font-size="6.8" fill="#a0a0a0" textLength="4.0" lengthAdjust="spacingAndGlyphs" transform="rotate(90 28.2 602.00)">8</text>
<text x="26.2" y="611.1000000000001" font-size="6.8" fill="#a0a0a0" textLength="4.0" lengthAdjust="spacingAndGlyphs" transform="rotate(90 28.2 608.60)">0</text>
<text x="26.2" y="617.7" font-size="6.8" fill="#a0a0a0" textLength="4.0" lengthAdjust="spacingAndGlyphs" transform="rotate(90 28.2 615.20)">0</text>
<rect x="25" y="618.6" width="11" height="0.8" fill="#6a6a6a" />
<rect x="33.5" y="625.85" width="2.5" height="0.7" fill="#626262" />
<rect x="32" y="633.05" width="4" height="0.7" fill="#626262" />
<rect x="33.5" y="640.25" width="2.5" height="0.7" fill="#626262" />
<text x="26.2" y="626.7" font-size="6.8" fill="#a0a0a0" textLength="4.0" lengthAdjust="spacingAndGlyphs" transform="rotate(90 28.2 624.20)">3</text>
<text x="26.2" y="633.3000000000001" font-size="6.8" fill="#a0a0a0" textLength="4.0" lengthAdjust="spacingAndGlyphs" transform="rotate(90 28.2 630.80)">0</text>
<text x="26.2" y="639.9000000000001" font-size="6.8" fill="#a0a0a0" textLength="4.0" lengthAdjust="spacingAndGlyphs" transform="rotate(90 28.2 637.40)">0</text>
<text x="26.2" y="646.5" font-size="6.8" fill="#a0a0a0" textLength="4.0" lengthAdjust="spacingAndGlyphs" transform="rotate(90 28.2 644.00)">0</text>
<rect x="25" y="647.4" width="11" height="0.8" fill="#6a6a6a" />
<rect x="33.5" y="654.65" width="2.5" height="0.7" fill="#626262" />
<rect x="32" y="661.8499999999999" width="4" height="0.7" fill="#626262" />
<rect x="33.5" y="669.05" width="2.5" height="0.7" fill="#626262" />
<text x="26.2" y="655.5" font-size="6.8" fill="#a0a0a0" textLength="4.0" lengthAdjust="spacingAndGlyphs" transform="rotate(90 28.2 653.00)">3</text>
<text x="26.2" y="662.1" font-size="6.8" fill="#a0a0a0" textLength="4.0" lengthAdjust="spacingAndGlyphs" transform="rotate(90 28.2 659.60)">2</text>
<text x="26.2" y="668.7" font-size="6.8" fill="#a0a0a0" textLength="4.0" lengthAdjust="spacingAndGlyphs" transform="rotate(90 28.2 666.20)">0</text>
<text x="26.2" y="675.3" font-size="6.8" fill="#a0a0a0" textLength="4.0" lengthAdjust="spacingAndGlyphs" transform="rotate(90 28.2 672.80)">0</text>
<rect x="25" y="676.2" width="11" height="0.8" fill="#6a6a6a" />
<rect x="33.5" y="683.45" width="2.5" height="0.7" fill="#626262" />
<rect x="32" y="690.65" width="4" height="0.7" fill="#626262" />
<rect x="33.5" y="697.85" width="2.5" height="0.7" fill="#626262" />
<text x="26.2" y="684.3000000000001" font-size="6.8" fill="#a0a0a0" textLength="4.0" lengthAdjust="spacingAndGlyphs" transform="rotate(90 28.2 681.80)">3</text>
<text x="26.2" y="690.9000000000001" font-size="6.8" fill="#a0a0a0" textLength="4.0" lengthAdjust="spacingAndGlyphs" transform="rotate(90 28.2 688.40)">4</text>
<text x="26.2" y="697.5000000000001" font-size="6.8" fill="#a0a0a0" textLength="4.0" lengthAdjust="spacingAndGlyphs" transform="rotate(90 28.2 695.00)">0</text>
<text x="26.2" y="704.1" font-size="6.8" fill="#a0a0a0" textLength="4.0" lengthAdjust="spacingAndGlyphs" transform="rotate(90 28.2 701.60)">0</text>
<rect x="25" y="705.0" width="11" height="0.8" fill="#6a6a6a" />
<text x="30" y="719.5" font-size="8" fill="#d0d0d0" stroke="#d0d0d0" stroke-width="0.25" textLength="20" lengthAdjust="spacingAndGlyphs" >20.66%</text>
<rect x="50" y="711.5" width="120" height="8.5" fill="#474747" />
<text x="70" y="719.5" font-size="8" fill="#c8c8c8" stroke="#c8c8c8" stroke-width="0.25" textLength="78" lengthAdjust="spacingAndGlyphs" >2232 px x 2854 px (250 ppi)</text>
<text x="165" y="719.5" font-size="7" fill="#aaaaaa" stroke="#aaaaaa" stroke-width="0.25" >&gt;</text>
<text x="3" y="47.5" font-size="8" fill="#bbbbbb" stroke="#bbbbbb" stroke-width="0.25" >»</text>
<rect x="3.2" y="61.9" width="18.3" height="15.7" fill="#3d3d3d" />
<g stroke="#d6d6d6" stroke-width="1.1" fill="none"><line x1="12.3" y1="65.5" x2="12.3" y2="74.5"/><line x1="7.8" y1="70" x2="16.8" y2="70"/></g>
<g fill="#d6d6d6"><circle cx="12.3" cy="65.2" r="1.3"/><circle cx="12.3" cy="74.8" r="1.3"/><circle cx="7.5" cy="70" r="1.3"/><circle cx="17.1" cy="70" r="1.3"/></g>
<path d="M18.5 76 l1.6 0 l0 -1.6z" fill="#9a9a9a"/>
<rect x="7.5" y="82.5" width="10" height="9" fill="none" stroke="#d6d6d6" stroke-width="1" stroke-dasharray="2 1.2"/>
<path d="M18.5 94 l1.6 0 l0 -1.6z" fill="#9a9a9a"/>
<path d="M7.8 101.2 Q10 104 12.2 103.8 Q15.5 103 17.6 99.8 Q18.2 105.5 12.8 108.6 L8.8 109.6 M12.8 108.6 L10.2 111.6 M8.6 103.2 Q9.6 107 12.8 108.6" stroke="#d6d6d6" stroke-width="1.2" fill="none" stroke-linejoin="round"/>
<path d="M18.5 111 l1.6 0 l0 -1.6z" fill="#9a9a9a"/>
<rect x="8.3" y="118.4" width="7.8" height="9.6" fill="none" stroke="#bcbcbc" stroke-width="0.9"/><rect x="9.8" y="120" width="3.4" height="4.2" fill="#f0f0f0"/><path d="M13.6 123.2 L18.6 127.8 L16.2 128.2 L17.4 130.6 L16 131.2 L14.8 128.8 L13.6 130.2 Z" fill="#d6d6d6"/>
<path d="M19 130 l1.6 0 l0 -1.6z" fill="#9a9a9a"/>
<path d="M9.5 135.5 V144.5 H18.5 M6.5 138.5 H15.5 V147.5" stroke="#d6d6d6" stroke-width="1.4" fill="none"/>
<path d="M19 148 l1.6 0 l0 -1.6z" fill="#9a9a9a"/>
<rect x="7.8" y="154.5" width="9.5" height="9" fill="none" stroke="#d6d6d6" stroke-width="1"/><path d="M8 154.7 L17 163.3 M17 154.7 L8 163.3" stroke="#d6d6d6" stroke-width="1.1"/>
<path d="M16.5 171.5 L18 173 L10 181 L8 182 L9 180 Z" fill="none" stroke="#d6d6d6" stroke-width="1.2"/><path d="M14.5 171 L19 175.5" stroke="#d6d6d6" stroke-width="2.2"/>
<path d="M19 183 l1.6 0 l0 -1.6z" fill="#9a9a9a"/>
<g transform="rotate(-45 12.5 195)"><rect x="6" y="192" width="13" height="6" rx="2.5" fill="#d6d6d6"/><rect x="10.5" y="192.8" width="4" height="4.4" fill="#7a7a7a"/></g>
<path d="M19 202 l1.6 0 l0 -1.6z" fill="#9a9a9a"/>
<path d="M17.5 206.5 L12 214" stroke="#d6d6d6" stroke-width="1.3"/><path d="M11.8 213.2 Q8 214 8.3 219 Q12.5 218.5 13 214.5 Z" fill="#d6d6d6"/>
<path d="M19 220 l1.6 0 l0 -1.6z" fill="#9a9a9a"/>
<circle cx="12.5" cy="227.5" r="2.4" fill="#d6d6d6"/><rect x="11.5" y="229" width="2" height="3" fill="#d6d6d6"/><rect x="7.5" y="231.5" width="10" height="3" fill="#d6d6d6"/><rect x="8" y="235.5" width="9" height="1.2" fill="#d6d6d6"/>
<path d="M19 238 l1.6 0 l0 -1.6z" fill="#9a9a9a"/>
<path d="M17.5 244 L12 251" stroke="#d6d6d6" stroke-width="1.3"/><path d="M11.8 250.2 Q8 251 8.3 256 Q12.5 255.5 13 251.5 Z" fill="#d6d6d6"/><path d="M7 247 Q9 245 12 247" stroke="#d6d6d6" stroke-width="1" fill="none"/>
<path d="M19 257 l1.6 0 l0 -1.6z" fill="#9a9a9a"/>
<g transform="rotate(-40 12 267)"><rect x="8" y="264" width="9" height="5.5" rx="1" fill="none" stroke="#d6d6d6" stroke-width="1"/><rect x="13" y="264" width="4" height="5.5" fill="#d6d6d6"/></g><path d="M8 272 H17" stroke="#d6d6d6" stroke-width="0.8"/>
<path d="M19 274 l1.6 0 l0 -1.6z" fill="#9a9a9a"/>
<defs><linearGradient id="gr" x1="0" y1="0" x2="1" y2="1"><stop offset="0" stop-color="#202020"/><stop offset="1" stop-color="#e0e0e0"/></linearGradient></defs>
<rect x="7.5" y="281" width="10" height="9.5" fill="url(#gr)" stroke="#d6d6d6" stroke-width="1"/>
<path d="M19 292 l1.6 0 l0 -1.6z" fill="#9a9a9a"/>
<path d="M12.5 298 Q16.5 303.5 16.5 306 A4 4 0 0 1 8.5 306 Q8.5 303.5 12.5 298Z" fill="#d6d6d6"/>
<path d="M19 310 l1.6 0 l0 -1.6z" fill="#9a9a9a"/>
<circle cx="13.5" cy="318.5" r="3.6" fill="#d6d6d6"/><path d="M11 321 L7.5 326" stroke="#d6d6d6" stroke-width="1.6"/>
<path d="M19 328 l1.6 0 l0 -1.6z" fill="#9a9a9a"/>
<path d="M9 345 Q8 339 12.5 335.5 L17 339.5 Q14 345 9 345 Z M11 342 L12.8 340.3" fill="none" stroke="#d6d6d6" stroke-width="1.1"/>
<path d="M19 347 l1.6 0 l0 -1.6z" fill="#9a9a9a"/>
<text x="7.5" y="364.5" font-size="12" fill="#d6d6d6" stroke="#d6d6d6" stroke-width="0.25" textLength="10" lengthAdjust="spacingAndGlyphs" font-weight="bold" style="font-family:&quot;Liberation Serif&quot;" >T</text>
<path d="M19 365 l1.6 0 l0 -1.6z" fill="#9a9a9a"/>
<path d="M9.5 371 L17 378 L13.5 378.5 L15.5 382.5 L14 383.2 L12 379.3 L9.5 382 Z" fill="#d6d6d6"/>
<path d="M19 383 l1.6 0 l0 -1.6z" fill="#9a9a9a"/>
<rect x="7.5" y="390" width="10" height="9.5" fill="none" stroke="#d6d6d6" stroke-width="1"/>
<path d="M19 401 l1.6 0 l0 -1.6z" fill="#9a9a9a"/>
<path d="M9.2 413.5 L8.2 411 Q8.6 409.8 9.8 410.6 L10.6 412 V407.6 Q11.6 406.6 12.4 407.6 V410.4 V406.8 Q13.3 405.9 14.2 406.8 V410.4 V407.4 Q15.1 406.6 15.9 407.4 V411 V409.2 Q16.8 408.5 17.4 409.3 V413.8 Q17 418 13.5 418.6 Q10.5 418.4 9.2 413.5Z" fill="#d6d6d6"/>
<path d="M19 419 l1.6 0 l0 -1.6z" fill="#9a9a9a"/>
<circle cx="11.5" cy="429.5" r="3.8" fill="none" stroke="#d6d6d6" stroke-width="1.3"/><path d="M14.3 432.3 L17.5 435.5" stroke="#d6d6d6" stroke-width="1.7"/>
<rect x="7" y="448.2" width="2.1" height="2.1" fill="#d6d6d6"/>
<rect x="11.3" y="448.2" width="2.1" height="2.1" fill="#d6d6d6"/>
<rect x="15.600000000000001" y="448.2" width="2.1" height="2.1" fill="#d6d6d6"/>
<rect x="5.5" y="466" width="3.5" height="3.5" fill="#d6d6d6"/><rect x="3.5" y="463.5" width="3.5" height="3.5" fill="#111" stroke="#d6d6d6" stroke-width="0.6"/>
<path d="M14.5 463.5 H18.5 V469" stroke="#d6d6d6" stroke-width="0.9" fill="none"/><path d="M13.5 463.5 l1.5 -1.3 v2.6z M18.5 470 l-1.3 -1.5 h2.6z" fill="#d6d6d6"/>
<rect x="9" y="480.3" width="11.8" height="13.2" fill="#ffffff" />
<rect x="3" y="474" width="11.6" height="11.8" fill="#ffffff" />
<rect x="3" y="474" width="11.6" height="11.8" fill="none" stroke="#555" stroke-width="0.5"/>
<rect x="7.3" y="502" width="10.5" height="8.8" fill="none" stroke="#c8c8c8" stroke-width="0.9"/><circle cx="12.5" cy="506.4" r="2.6" fill="none" stroke="#c8c8c8" stroke-width="0.9"/>
<rect x="10" y="519.8" width="7.5" height="6" fill="none" stroke="#c8c8c8" stroke-width="0.9"/><rect x="7" y="522.5" width="7.5" height="6.3" fill="#535353" stroke="#c8c8c8" stroke-width="0.9"/>
<path d="M512.3 189.6 C521.5 189.6 523.5 191.6 523.5 201.3 C523.5 211 521.5 213 512.3 213 C503.1 213 501.1 211 501.1 201.3 C501.1 191.6 503.1 189.6 512.3 189.6Z" fill="#1158e6"/>
<path d="M507 205.9 V196.8 H509.6 L512.55 201.6 L515.5 196.8 H518.1 V205.9 H515.6 V200.6 L513.3 204.3 H511.8 L509.5 200.6 V205.9 Z" fill="#ffffff"/>
<text x="529.3" y="205.6" font-size="11.6" fill="#141414" stroke="#141414" stroke-width="0.45" textLength="38.5" lengthAdjust="spacingAndGlyphs" font-weight="bold" >Monie</text>
<text x="568.2" y="205.6" font-size="11.6" fill="#141414" stroke="#141414" stroke-width="0.1" textLength="30.8" lengthAdjust="spacingAndGlyphs" >point</text>
<text x="529.8" y="212.1" font-size="2.9" fill="#3a3a3a" textLength="69" lengthAdjust="spacing">MICROFINANCE BANK</text>
<text x="369.4" y="239.1" font-size="6" fill="#111111" stroke="#111111" stroke-width="0.22" textLength="48.4" lengthAdjust="spacingAndGlyphs" font-weight="bold" style="font-family:&quot;Liberation Serif&quot;" >Account Statement</text>
<text x="551" y="239.1" font-size="6" fill="#111111" stroke="#111111" stroke-width="0.22" textLength="48.5" lengthAdjust="spacingAndGlyphs" font-weight="bold" style="font-family:&quot;Liberation Serif&quot;" >Account Summary</text>
<text x="369.4" y="249.8" font-size="5.2" fill="#111111" stroke="#111111" stroke-width="0.22" textLength="37.400000000000034" lengthAdjust="spacingAndGlyphs" font-weight="bold" fill-opacity="0.92">Account Name</text>
<text x="419" y="249.8" font-size="5" fill="#111111" stroke="#111111" stroke-width="0.22" textLength="31.69999999999999" lengthAdjust="spacingAndGlyphs" font-weight="bold" >JOHN CITIZEN</text>
<text x="369.4" y="259" font-size="5.2" fill="#111111" stroke="#111111" stroke-width="0.22" textLength="43.10000000000002" lengthAdjust="spacingAndGlyphs" font-weight="bold" fill-opacity="0.92">Account Number</text>
<text x="419" y="259" font-size="5" fill="#111111" stroke="#111111" stroke-width="0.22" textLength="25.30000000000001" lengthAdjust="spacingAndGlyphs" font-weight="bold" >8254131519</text>
<text x="369.4" y="265.8" font-size="5.2" fill="#111111" stroke="#111111" stroke-width="0.22" textLength="22.400000000000034" lengthAdjust="spacingAndGlyphs" font-weight="bold" fill-opacity="0.92">Currency</text>
<text x="418.3" y="265.8" font-size="5" fill="#111111" stroke="#111111" stroke-width="0.22" textLength="9.699999999999989" lengthAdjust="spacingAndGlyphs" font-weight="bold" >NGN</text>
<text x="369.4" y="273.3" font-size="5.2" fill="#111111" stroke="#111111" stroke-width="0.22" textLength="11.400000000000034" lengthAdjust="spacingAndGlyphs" font-weight="bold" fill-opacity="0.92">Date</text>
<text x="418.3" y="273.3" font-size="5" fill="#111111" stroke="#111111" stroke-width="0.22" textLength="22.69999999999999" lengthAdjust="spacingAndGlyphs" font-weight="bold" >23/05/2025</text>
<text x="538.8" y="252.2" font-size="4.6" fill="#111111" stroke="#111111" stroke-width="0.22" textLength="32.200000000000045" lengthAdjust="spacingAndGlyphs" font-weight="bold" >Opening Balance</text>
<text x="578.8" y="252.2" font-size="4.6" fill="#111111" stroke="#111111" stroke-width="0.22" textLength="20.200000000000045" lengthAdjust="spacingAndGlyphs" font-weight="bold" >441,234.77</text>
<text x="548" y="257.6" font-size="4.6" fill="#111111" stroke="#111111" stroke-width="0.22" textLength="23" lengthAdjust="spacingAndGlyphs" font-weight="bold" >Total Debits</text>
<text x="574" y="257.6" font-size="4.6" fill="#111111" stroke="#111111" stroke-width="0.22" textLength="25" lengthAdjust="spacingAndGlyphs" font-weight="bold" >31,300,567.00</text>
<text x="547" y="263" font-size="4.6" fill="#111111" stroke="#111111" stroke-width="0.22" textLength="24" lengthAdjust="spacingAndGlyphs" font-weight="bold" >Total Credits</text>
<text x="574" y="263" font-size="4.6" fill="#111111" stroke="#111111" stroke-width="0.22" textLength="25" lengthAdjust="spacingAndGlyphs" font-weight="bold" >31,330,215.53</text>
<text x="540" y="268.6" font-size="4.6" fill="#111111" stroke="#111111" stroke-width="0.22" textLength="31" lengthAdjust="spacingAndGlyphs" font-weight="bold" >Closing Balance</text>
<text x="579" y="268.6" font-size="4.6" fill="#111111" stroke="#111111" stroke-width="0.22" textLength="20" lengthAdjust="spacingAndGlyphs" font-weight="bold" >380,863.30</text>
<text x="371.9" y="301.6" font-size="5" fill="#111111" stroke="#111111" stroke-width="0.22" textLength="9.100000000000023" lengthAdjust="spacingAndGlyphs" font-weight="bold" >Date</text>
<text x="402" y="301.6" font-size="5" fill="#111111" stroke="#111111" stroke-width="0.22" textLength="20.30000000000001" lengthAdjust="spacingAndGlyphs" font-weight="bold" >Narration</text>
<text x="501" y="301.6" font-size="5" fill="#111111" stroke="#111111" stroke-width="0.22" textLength="22.100000000000023" lengthAdjust="spacingAndGlyphs" font-weight="bold" >Reference</text>
<text x="646.7" y="301.6" font-size="5" fill="#111111" stroke="#111111" stroke-width="0.22" textLength="11.599999999999909" lengthAdjust="spacingAndGlyphs" font-weight="bold" >Debit</text>
<text x="669.7" y="301.6" font-size="5" fill="#111111" stroke="#111111" stroke-width="0.22" textLength="13.299999999999955" lengthAdjust="spacingAndGlyphs" font-weight="bold" >Credit</text>
<text x="692.5" y="301.6" font-size="5" fill="#111111" stroke="#111111" stroke-width="0.22" textLength="17.799999999999955" lengthAdjust="spacingAndGlyphs" font-weight="bold" >Balance</text>
<rect x="368.8" y="312.3" width="344" height="36.89999999999998" fill="#c7c5bb" />
<text x="372" y="329.25" font-size="3.1" fill="#111111" stroke="#111111" stroke-width="0.16" textLength="19.5" lengthAdjust="spacingAndGlyphs" font-weight="bold" >2025-05-22T09:</text>
<text x="372" y="334.75" font-size="3.1" fill="#111111" stroke="#111111" stroke-width="0.16" textLength="7" lengthAdjust="spacingAndGlyphs" font-weight="bold" >21:24</text>
<text x="402" y="326.25" font-size="3.1" fill="#111111" stroke="#111111" stroke-width="0.16" textLength="78" lengthAdjust="spacingAndGlyphs" font-weight="bold" >WITHDRAWAL FOR CUSTOMER65047487 Access Bank</text>
<text x="402" y="331.65" font-size="3.1" fill="#111111" stroke="#111111" stroke-width="0.16" textLength="21" lengthAdjust="spacingAndGlyphs" font-weight="bold" >4125*****2044</text>
<text x="402" y="337.84999999999997" font-size="3.1" fill="#111111" stroke="#111111" stroke-width="0.16" textLength="89" lengthAdjust="spacingAndGlyphs" font-weight="bold" >IMTROGD5D52E5D001E7XB90D0F75ASR0000D01 1B5ED0059</text>
<text x="501" y="331.95" font-size="3.1" fill="#111111" stroke="#111111" stroke-width="0.16" textLength="136" lengthAdjust="spacingAndGlyphs" font-weight="bold" >PT1QD0GD2E5404101E0D0F7ASF5S00000F0010D5D_BATCH_E5000440_CREDIT_5</text>
<text x="647" y="331.95" font-size="3.1" fill="#111111" stroke="#111111" stroke-width="0.16" textLength="5" lengthAdjust="spacingAndGlyphs" font-weight="bold" >0.00</text>
<text x="670" y="331.95" font-size="3.1" fill="#111111" stroke="#111111" stroke-width="0.16" textLength="13" lengthAdjust="spacingAndGlyphs" font-weight="bold" >52,140.00</text>
<text x="693" y="331.95" font-size="3.1" fill="#111111" stroke="#111111" stroke-width="0.16" textLength="15" lengthAdjust="spacingAndGlyphs" font-weight="bold" >491,123.77</text>
<text x="372" y="363.29999999999995" font-size="3.1" fill="#111111" stroke="#111111" stroke-width="0.16" textLength="19.5" lengthAdjust="spacingAndGlyphs" font-weight="bold" >2025-05-22T09:</text>
<text x="372" y="368.79999999999995" font-size="3.1" fill="#111111" stroke="#111111" stroke-width="0.16" textLength="7" lengthAdjust="spacingAndGlyphs" font-weight="bold" >33:22</text>
<text x="402" y="365.99999999999994" font-size="3.1" fill="#111111" stroke="#111111" stroke-width="0.16" textLength="54" lengthAdjust="spacingAndGlyphs" font-weight="bold" >ATRQMPTnglbl7HDD40D7K0 DOE05_debt</text>
<text x="501" y="365.99999999999994" font-size="3.1" fill="#111111" stroke="#111111" stroke-width="0.16" textLength="66" lengthAdjust="spacingAndGlyphs" font-weight="bold" >ATRQMPTnglbl7HDD40D7K0 DOE05_DEBIT_5</text>
<text x="647" y="365.99999999999994" font-size="3.1" fill="#111111" stroke="#111111" stroke-width="0.16" textLength="9.5" lengthAdjust="spacingAndGlyphs" font-weight="bold" >800.00</text>
<text x="670" y="365.99999999999994" font-size="3.1" fill="#111111" stroke="#111111" stroke-width="0.16" textLength="5" lengthAdjust="spacingAndGlyphs" font-weight="bold" >0.00</text>
<text x="693" y="365.99999999999994" font-size="3.1" fill="#111111" stroke="#111111" stroke-width="0.16" textLength="15" lengthAdjust="spacingAndGlyphs" font-weight="bold" >490,363.77</text>
<rect x="368.8" y="380.4" width="344" height="36.400000000000034" fill="#c7c5bb" />
<text x="372" y="397.1" font-size="3.1" fill="#111111" stroke="#111111" stroke-width="0.16" textLength="19.5" lengthAdjust="spacingAndGlyphs" font-weight="bold" >2025-05-22T10:</text>
<text x="372" y="402.6" font-size="3.1" fill="#111111" stroke="#111111" stroke-width="0.16" textLength="7" lengthAdjust="spacingAndGlyphs" font-weight="bold" >22:27</text>
<text x="402" y="394.1" font-size="3.1" fill="#111111" stroke="#111111" stroke-width="0.16" textLength="78" lengthAdjust="spacingAndGlyphs" font-weight="bold" >WITHDRAWAL FOR CUSTOMER65047487 Access Bank</text>
<text x="402" y="399.5" font-size="3.1" fill="#111111" stroke="#111111" stroke-width="0.16" textLength="21" lengthAdjust="spacingAndGlyphs" font-weight="bold" >4125*****4404</text>
<text x="402" y="405.7" font-size="3.1" fill="#111111" stroke="#111111" stroke-width="0.16" textLength="89" lengthAdjust="spacingAndGlyphs" font-weight="bold" >IMTROGD5D52E5D001E7XB90D0F75ASR0000D01 1B5ED0059</text>
<text x="501" y="399.8" font-size="3.1" fill="#111111" stroke="#111111" stroke-width="0.16" textLength="136" lengthAdjust="spacingAndGlyphs" font-weight="bold" >PT1QD0GD2E5404101E0D0F7ASF5S00000F0010D5D_BATCH_E5000440_CREDIT_5</text>
<text x="647" y="399.8" font-size="3.1" fill="#111111" stroke="#111111" stroke-width="0.16" textLength="5" lengthAdjust="spacingAndGlyphs" font-weight="bold" >0.00</text>
<text x="670" y="399.8" font-size="3.1" fill="#111111" stroke="#111111" stroke-width="0.16" textLength="13" lengthAdjust="spacingAndGlyphs" font-weight="bold" >40,000.00</text>
<text x="693" y="399.8" font-size="3.1" fill="#111111" stroke="#111111" stroke-width="0.16" textLength="15" lengthAdjust="spacingAndGlyphs" font-weight="bold" >491,755.77</text>
<text x="372" y="430.85" font-size="3.1" fill="#111111" stroke="#111111" stroke-width="0.16" textLength="19.5" lengthAdjust="spacingAndGlyphs" font-weight="bold" >2025-05-22T10:</text>
<text x="372" y="436.35" font-size="3.1" fill="#111111" stroke="#111111" stroke-width="0.16" textLength="7" lengthAdjust="spacingAndGlyphs" font-weight="bold" >33:48</text>
<text x="402" y="430.85" font-size="3.1" fill="#111111" stroke="#111111" stroke-width="0.16" textLength="30" lengthAdjust="spacingAndGlyphs" font-weight="bold" >MANSIDRA GOODS</text>
<text x="402" y="436.35" font-size="3.1" fill="#111111" stroke="#111111" stroke-width="0.16" textLength="58" lengthAdjust="spacingAndGlyphs" font-weight="bold" >NGNBCRPV0PT5D5E7F0D71 1D5E0D5D40_debt</text>
<text x="501" y="433.55" font-size="3.1" fill="#111111" stroke="#111111" stroke-width="0.16" textLength="64" lengthAdjust="spacingAndGlyphs" font-weight="bold" >TRFQMPTC9NO7BC51 D5D5D5D40_DEBIT_5</text>
<text x="647" y="433.55" font-size="3.1" fill="#111111" stroke="#111111" stroke-width="0.16" textLength="9.5" lengthAdjust="spacingAndGlyphs" font-weight="bold" >42,132.00</text>
<text x="670" y="433.55" font-size="3.1" fill="#111111" stroke="#111111" stroke-width="0.16" textLength="5" lengthAdjust="spacingAndGlyphs" font-weight="bold" >0.00</text>
<text x="693" y="433.55" font-size="3.1" fill="#111111" stroke="#111111" stroke-width="0.16" textLength="15" lengthAdjust="spacingAndGlyphs" font-weight="bold" >450,713.77</text>
<rect x="368.8" y="447.9" width="344" height="35.900000000000034" fill="#c7c5bb" />
<text x="372" y="464.35" font-size="3.1" fill="#111111" stroke="#111111" stroke-width="0.16" textLength="19.5" lengthAdjust="spacingAndGlyphs" font-weight="bold" >2025-05-22T10:</text>
<text x="372" y="469.85" font-size="3.1" fill="#111111" stroke="#111111" stroke-width="0.16" textLength="7" lengthAdjust="spacingAndGlyphs" font-weight="bold" >33:42</text>
<text x="402" y="461.35" font-size="3.1" fill="#111111" stroke="#111111" stroke-width="0.16" textLength="78" lengthAdjust="spacingAndGlyphs" font-weight="bold" >WITHDRAWAL FOR CUSTOMER65047487 Access Bank</text>
<text x="402" y="466.75" font-size="3.1" fill="#111111" stroke="#111111" stroke-width="0.16" textLength="21" lengthAdjust="spacingAndGlyphs" font-weight="bold" >4125*****0448</text>
<text x="402" y="472.95" font-size="3.1" fill="#111111" stroke="#111111" stroke-width="0.16" textLength="89" lengthAdjust="spacingAndGlyphs" font-weight="bold" >IMTROGD5D52E5D001E7XB90D0F75ASR0000D01 1B7D5D5D</text>
<text x="501" y="467.05" font-size="3.1" fill="#111111" stroke="#111111" stroke-width="0.16" textLength="136" lengthAdjust="spacingAndGlyphs" font-weight="bold" >PT1QD0GD2E5404101E0D0F7ASF5S00000F0010D5D_BATCH_E5000440_CREDIT_5</text>
<text x="647" y="467.05" font-size="3.1" fill="#111111" stroke="#111111" stroke-width="0.16" textLength="5" lengthAdjust="spacingAndGlyphs" font-weight="bold" >0.00</text>
<text x="670" y="467.05" font-size="3.1" fill="#111111" stroke="#111111" stroke-width="0.16" textLength="13" lengthAdjust="spacingAndGlyphs" font-weight="bold" >15,160.00</text>
<text x="693" y="467.05" font-size="3.1" fill="#111111" stroke="#111111" stroke-width="0.16" textLength="15" lengthAdjust="spacingAndGlyphs" font-weight="bold" >466,824.77</text>
<text x="372" y="501.04999999999995" font-size="3.1" fill="#111111" stroke="#111111" stroke-width="0.16" textLength="19.5" lengthAdjust="spacingAndGlyphs" font-weight="bold" >2025-05-22T10:</text>
<text x="372" y="506.54999999999995" font-size="3.1" fill="#111111" stroke="#111111" stroke-width="0.16" textLength="7" lengthAdjust="spacingAndGlyphs" font-weight="bold" >34:52</text>
<text x="402" y="498.04999999999995" font-size="3.1" fill="#111111" stroke="#111111" stroke-width="0.16" textLength="78" lengthAdjust="spacingAndGlyphs" font-weight="bold" >WITHDRAWAL FOR ALKADIMUSPEACE Paxus Bank</text>
<text x="402" y="503.44999999999993" font-size="3.1" fill="#111111" stroke="#111111" stroke-width="0.16" textLength="21" lengthAdjust="spacingAndGlyphs" font-weight="bold" >5304*****9005</text>
<text x="402" y="509.6499999999999" font-size="3.1" fill="#111111" stroke="#111111" stroke-width="0.16" textLength="89" lengthAdjust="spacingAndGlyphs" font-weight="bold" >IMTROGD5D52E5D001F0 4E5D7F5A7F5S00000 0D4D5D00</text>
<text x="501" y="503.74999999999994" font-size="3.1" fill="#111111" stroke="#111111" stroke-width="0.16" textLength="133" lengthAdjust="spacingAndGlyphs" font-weight="bold" >PT1QD0GD2E5404101F0 4E5D7F5A7F5S00000F0010 D5D_BATCH_E5000440_CREDIT_5</text>
<text x="647" y="503.74999999999994" font-size="3.1" fill="#111111" stroke="#111111" stroke-width="0.16" textLength="5" lengthAdjust="spacingAndGlyphs" font-weight="bold" >0.00</text>
<text x="670" y="503.74999999999994" font-size="3.1" fill="#111111" stroke="#111111" stroke-width="0.16" textLength="13" lengthAdjust="spacingAndGlyphs" font-weight="bold" >2,675.50</text>
<text x="693" y="503.74999999999994" font-size="3.1" fill="#111111" stroke="#111111" stroke-width="0.16" textLength="15" lengthAdjust="spacingAndGlyphs" font-weight="bold" >463,835.27</text>
<rect x="368.8" y="521.3" width="344" height="14.1" fill="#c7c5bb" />
<rect x="859" y="61" width="11" height="659" fill="#4b4b4b" />
<rect x="869.5" y="40" width="26" height="9" fill="#434343" />
<text x="886" y="47.3" font-size="8" fill="#c8c8c8" stroke="#c8c8c8" stroke-width="0.25" >«</text>
<rect x="870" y="49" width="25" height="671" fill="#535353" />
<rect x="869.3" y="49" width="0.9" height="671" fill="#404040" />
<rect x="894.3" y="49" width="0.9" height="671" fill="#404040" />
<rect x="870" y="98" width="25" height="1.2" fill="#464646" />
<rect x="870" y="145.5" width="25" height="1.2" fill="#464646" />
<rect x="870" y="174.5" width="25" height="1.2" fill="#464646" />
<rect x="870" y="202" width="25" height="1.2" fill="#464646" />
<g fill="#d2d2d2"><rect x="875.8" y="59" width="0.9" height="6"/><rect x="876.7" y="59" width="3.8" height="0.8"/><rect x="876.7" y="61.2" width="3.2" height="0.8"/><rect x="876.7" y="63.4" width="2.6" height="0.8"/></g>
<path d="M888.8 60.8 L883.2 66.6" stroke="#d2d2d2" stroke-width="2" stroke-linecap="round"/><path d="M882.6 65.8 Q879.2 66.8 879 70.3 Q882.6 70.2 884.2 67.4Z" fill="#d2d2d2" stroke="#d2d2d2" stroke-width="0.6"/>
<g fill="#d2d2d2"><ellipse cx="879.5" cy="80.5" rx="2.6" ry="1.9"/><rect x="882" y="80" width="6" height="1"/><rect x="876" y="86" width="7" height="1"/><path d="M883 86.5 L888.5 83 V90 Z"/></g>
<text x="876" y="118" font-size="11" fill="#d2d2d2" stroke="#d2d2d2" stroke-width="0.25" textLength="8" lengthAdjust="spacingAndGlyphs" >A</text>
<rect x="885.5" y="107" width="0.9" height="11" fill="#d2d2d2" />
<text x="877.5" y="137" font-size="11" fill="#d2d2d2" stroke="#d2d2d2" stroke-width="0.25" textLength="7" lengthAdjust="spacingAndGlyphs" font-weight="bold" >¶</text>
<text x="876.5" y="165.5" font-size="12" fill="#d2d2d2" stroke="#d2d2d2" stroke-width="0.25" textLength="10" lengthAdjust="spacingAndGlyphs" style="font-family:&quot;Liberation Serif&quot;" font-style="italic">A</text>
<path d="M882.8 183.5 L888 186.5 V192.5 L882.8 195.5 L877.6 192.5 V186.5 Z" fill="#8e8e8e"/><path d="M882.8 183.5 L888 186.5 V192.5 L882.8 195.5 L877.6 192.5 V186.5 Z M877.6 186.5 L882.8 189.5 L888 186.5 M882.8 189.5 V195.5" stroke="#d4d4d4" stroke-width="1.1" fill="none"/>
<rect x="895" y="40" width="185" height="8.5" fill="#434343" />
<text x="1065.5" y="47.3" font-size="8" fill="#d0d0d0" stroke="#d0d0d0" stroke-width="0.25" >»</text>
<rect x="896" y="48.5" width="179" height="19.5" fill="#474747" />
<rect x="1009.6" y="48.5" width="39.7" height="20" fill="#535353" />
<text x="901.7" y="60.8" font-size="7.6" fill="#b8b8b8" stroke="#b8b8b8" stroke-width="0.25" textLength="16.59999999999991" lengthAdjust="spacingAndGlyphs" >Swatc</text>
<text x="923.9" y="60.8" font-size="7.6" fill="#b8b8b8" stroke="#b8b8b8" stroke-width="0.25" textLength="16.600000000000023" lengthAdjust="spacingAndGlyphs" >Gradi</text>
<text x="946.7" y="60.8" font-size="7.6" fill="#b8b8b8" stroke="#b8b8b8" stroke-width="0.25" textLength="17.199999999999932" lengthAdjust="spacingAndGlyphs" >Patter</text>
<text x="968.9" y="60.8" font-size="7.6" fill="#b8b8b8" stroke="#b8b8b8" stroke-width="0.25" textLength="17.200000000000045" lengthAdjust="spacingAndGlyphs" >Histor</text>
<text x="991.7" y="60.8" font-size="7.6" fill="#b8b8b8" stroke="#b8b8b8" stroke-width="0.25" textLength="17.199999999999932" lengthAdjust="spacingAndGlyphs" >Actio</text>
<text x="1014" y="60.8" font-size="7.8" fill="#f2f2f2" stroke="#f2f2f2" stroke-width="0.25" textLength="31.2" lengthAdjust="spacingAndGlyphs" font-weight="bold" >Properties</text>
<rect x="1065.6" y="56.3" width="6.3" height="1.4" fill="#c0c0c0" />
<rect x="1065.6" y="59" width="6.3" height="1.4" fill="#c0c0c0" />
<rect x="896" y="68" width="179" height="24" fill="#535353" />
<rect x="903.3" y="72.9" width="13.4" height="14.4" fill="#3a3a3a" />
<path d="M906.7 75.8 H911.3 L913.6 78.1 V84.6 H906.7 Z M911.3 75.8 V78.1 H913.6" stroke="#d8d8d8" stroke-width="0.9" fill="none"/>
<text x="920" y="85.1" font-size="8.5" fill="#cfcfcf" stroke="#cfcfcf" stroke-width="0.25" textLength="29.4" lengthAdjust="spacingAndGlyphs" >Document</text>
<rect x="896" y="91.8" width="179" height="1.6" fill="#474747" />
<rect x="1075" y="40" width="1.5" height="680" fill="#3c3c3c" />
<rect x="1076.5" y="40" width="3.5" height="680" fill="#535353" />
<rect x="895" y="48.5" width="1.2" height="672" fill="#3c3c3c" />
<rect x="1066.5" y="93.5" width="8" height="280" fill="#4a4a4a" />
<rect x="1067" y="102" width="7" height="225" fill="#626262" />
<path d="M1068.5 98.5 L1070.5 96.5 L1072.5 98.5" stroke="#7a7a7a" stroke-width="0.8" fill="none"/>
<path d="M1068.5 360 L1070.5 362 L1072.5 360" stroke="#7a7a7a" stroke-width="0.8" fill="none"/>
<path d="M901.5 100.5 L903.7 102.7 L905.9 100.5" stroke="#8a8a8a" stroke-width="0.9" fill="none"/>
<text x="910" y="106.2" font-size="8" fill="#e6e6e6" stroke="#e6e6e6" stroke-width="0.25" textLength="22" lengthAdjust="spacingAndGlyphs" font-weight="bold" >Canvas</text>
<text x="929" y="123" font-size="7.5" fill="#a8a8a8" stroke="#a8a8a8" stroke-width="0.25" textLength="6" lengthAdjust="spacingAndGlyphs" >W</text>
<rect x="939.3" y="114.6" width="30.7" height="9.7" fill="#434343" />
<text x="941.5" y="122.6" font-size="7.8" fill="#dedede" stroke="#dedede" stroke-width="0.25" textLength="21.5" lengthAdjust="spacingAndGlyphs" >2232 px</text>
<text x="982" y="123" font-size="7.5" fill="#a0a0a0" stroke="#a0a0a0" stroke-width="0.25" textLength="5" lengthAdjust="spacingAndGlyphs" >X</text>
<rect x="990" y="114.6" width="31" height="9.7" fill="#4c4c4c" />
<text x="992" y="122.6" font-size="7.5" fill="#6a6a6a" textLength="12" lengthAdjust="spacingAndGlyphs" >0 px</text>
<text x="929.5" y="140" font-size="7.5" fill="#a8a8a8" stroke="#a8a8a8" stroke-width="0.25" textLength="5.5" lengthAdjust="spacingAndGlyphs" >H</text>
<rect x="939.3" y="132" width="30.7" height="9.7" fill="#434343" />
<text x="941.5" y="140" font-size="7.8" fill="#dedede" stroke="#dedede" stroke-width="0.25" textLength="21.5" lengthAdjust="spacingAndGlyphs" >2854 px</text>
<text x="982" y="140" font-size="7.5" fill="#a0a0a0" stroke="#a0a0a0" stroke-width="0.25" textLength="5" lengthAdjust="spacingAndGlyphs" >Y</text>
<rect x="990" y="132" width="31" height="9.7" fill="#4c4c4c" />
<text x="992" y="140" font-size="7.5" fill="#6a6a6a" textLength="12" lengthAdjust="spacingAndGlyphs" >0 px</text>
<g stroke="#cfcfcf" stroke-width="1.5" fill="none"><rect x="908.2" y="123.5" width="4.4" height="5" rx="2.2"/><rect x="908.2" y="128.6" width="4.4" height="5" rx="2.2"/></g><rect x="909.9" y="126.5" width="1" height="4" fill="#cfcfcf"/>
<rect x="939" y="151.5" width="12.6" height="15.1" fill="#3a3a3a" />
<rect x="941.3" y="153.5" width="8" height="11" fill="none" stroke="#d0d0d0" stroke-width="0.8"/><circle cx="945.3" cy="157" r="1.3" fill="#d0d0d0"/><rect x="943.3" y="158.8" width="4" height="5" fill="#d0d0d0"/>
<rect x="957" y="155" width="11" height="8.5" fill="none" stroke="#d0d0d0" stroke-width="0.8"/><circle cx="962.5" cy="157.8" r="1.2" fill="#d0d0d0"/><rect x="960.3" y="159.5" width="4.4" height="3.5" fill="#d0d0d0"/>
<text x="939" y="184.2" font-size="7.6" fill="#c4c4c4" stroke="#c4c4c4" stroke-width="0.25" textLength="73" lengthAdjust="spacingAndGlyphs" >Resolution: 250 pixels/inch</text>
<text x="918" y="200.4" font-size="7.6" fill="#b4b4b4" stroke="#b4b4b4" stroke-width="0.25" textLength="16" lengthAdjust="spacingAndGlyphs" >Mode</text>
<rect x="939.3" y="192" width="81" height="12.7" fill="#444444" />
<text x="943" y="201" font-size="7.8" fill="#d8d8d8" stroke="#d8d8d8" stroke-width="0.25" textLength="27" lengthAdjust="spacingAndGlyphs" >RGB Color</text>
<path d="M1015 197.5 L1017.2 199.7 L1019.4 197.5" stroke="#8a8a8a" stroke-width="0.9" fill="none"/>
<rect x="939.3" y="209.6" width="81" height="13.2" fill="#444444" />
<text x="943" y="219" font-size="7.8" fill="#d8d8d8" stroke="#d8d8d8" stroke-width="0.25" textLength="44" lengthAdjust="spacingAndGlyphs" >16 Bits/Channel</text>
<path d="M1015 215.5 L1017.2 217.7 L1019.4 215.5" stroke="#8a8a8a" stroke-width="0.9" fill="none"/>
<text x="925" y="237.5" font-size="7.6" fill="#a4a4a4" stroke="#a4a4a4" stroke-width="0.25" textLength="7" lengthAdjust="spacingAndGlyphs" >Fill</text>
<rect x="938.4" y="227" width="11.4" height="13" fill="#474747" />
<rect x="939" y="227.6" width="10.2" height="11.8" fill="none" stroke="#5e5e5e" stroke-width="0.7"/>
<rect x="953.3" y="228.6" width="67" height="12.4" fill="#444444" />
<text x="957" y="237.8" font-size="7.8" fill="#d8d8d8" stroke="#d8d8d8" stroke-width="0.25" textLength="35" lengthAdjust="spacingAndGlyphs" >Transparent</text>
<path d="M1015 233.5 L1017.2 235.7 L1019.4 233.5" stroke="#8a8a8a" stroke-width="0.9" fill="none"/>
<rect x="896" y="246.3" width="170" height="1.6" fill="#474747" />
<path d="M901.5 255.5 L903.7 257.7 L905.9 255.5" stroke="#8a8a8a" stroke-width="0.9" fill="none"/>
<text x="911" y="261" font-size="8" fill="#e6e6e6" stroke="#e6e6e6" stroke-width="0.25" textLength="44" lengthAdjust="spacingAndGlyphs" font-weight="bold" >Rulers &amp; Grids</text>
<rect x="903.2" y="269.8" width="14.6" height="16.9" fill="#3a3a3a" />
<path d="M906.5 284 V273 H915.5" stroke="#dcdcdc" stroke-width="2" fill="none"/>
<g stroke="#c8c8c8" stroke-width="0.7" fill="none"><rect x="925.5" y="272.3" width="11" height="11.5"/><line x1="929.2" y1="272.3" x2="929.2" y2="283.8"/><line x1="932.9" y1="272.3" x2="932.9" y2="283.8"/><line x1="925.5" y1="276.1" x2="936.5" y2="276.1"/><line x1="925.5" y1="280" x2="936.5" y2="280"/></g>
<g stroke="#b8b8b8" stroke-width="0.7" fill="none"><rect x="946" y="272.5" width="10.5" height="11"/><circle cx="951.2" cy="278" r="3.3" stroke-dasharray="1 1"/></g>
<rect x="975.3" y="272" width="45" height="13" fill="#444444" />
<text x="979" y="281.2" font-size="7.6" fill="#d0d0d0" stroke="#d0d0d0" stroke-width="0.25" textLength="16" lengthAdjust="spacingAndGlyphs" >Pixels</text>
<path d="M1015 277 L1017.2 279.2 L1019.4 277" stroke="#8a8a8a" stroke-width="0.9" fill="none"/>
<rect x="896" y="294.3" width="170" height="1.6" fill="#474747" />
<path d="M901.5 303 L903.7 305.2 L905.9 303" stroke="#8a8a8a" stroke-width="0.9" fill="none"/>
<text x="910" y="308.2" font-size="8" fill="#e6e6e6" stroke="#e6e6e6" stroke-width="0.25" textLength="21.7" lengthAdjust="spacingAndGlyphs" font-weight="bold" >Guides</text>
<rect x="903" y="316" width="15" height="18" fill="#3a3a3a" />
<g stroke="#d6d6d6" stroke-width="0.9" fill="none"><line x1="907.5" y1="318" x2="907.5" y2="332"/><line x1="905" y1="322" x2="916" y2="322"/><line x1="905" y1="328" x2="916" y2="328"/></g>
<g stroke="#c8c8c8" stroke-width="0.9" fill="none"><line x1="928" y1="318" x2="928" y2="332"/><line x1="930.5" y1="318" x2="930.5" y2="332"/><line x1="925.5" y1="322.5" x2="934" y2="322.5"/><line x1="925.5" y1="327" x2="934" y2="327"/></g><rect x="932.5" y="328" width="4.5" height="4" fill="#c8c8c8"/>
<rect x="944" y="316" width="14" height="18" fill="#3a3a3a" />
<g stroke="#d6d6d6" stroke-width="0.9" fill="none"><line x1="947.5" y1="318" x2="947.5" y2="332"/><line x1="946" y1="323" x2="955" y2="323"/><line x1="951" y1="320" x2="951" y2="332"/></g><rect x="952" y="327" width="3.5" height="4" fill="#d6d6d6"/>
<rect x="975.3" y="319" width="45" height="14" fill="#444444" />
<rect x="980" y="325.5" width="24" height="1.3" fill="#d6d6d6" />
<path d="M1015 324.5 L1017.2 326.7 L1019.4 324.5" stroke="#8a8a8a" stroke-width="0.9" fill="none"/>
<rect x="896" y="342" width="170" height="1.6" fill="#474747" />
<path d="M901.5 350 L903.7 352.2 L905.9 350" stroke="#8a8a8a" stroke-width="0.9" fill="none"/>
<text x="910" y="355.2" font-size="8" fill="#e6e6e6" stroke="#e6e6e6" stroke-width="0.25" textLength="43" lengthAdjust="spacingAndGlyphs" font-weight="bold" >Quick Actions</text>
<rect x="896" y="384.6" width="179" height="2.4" fill="#3c3c3c" />
<rect x="896" y="387" width="179" height="20.3" fill="#474747" />
<rect x="896" y="387" width="29.6" height="20.5" fill="#535353" />
<text x="900.5" y="399.6" font-size="7.8" fill="#efefef" stroke="#efefef" stroke-width="0.25" textLength="20.5" lengthAdjust="spacingAndGlyphs" font-weight="bold" >Layers</text>
<rect x="1066.5" y="396" width="6.3" height="1.4" fill="#c0c0c0" />
<rect x="1066.5" y="398.7" width="6.3" height="1.4" fill="#c0c0c0" />
<rect x="899.3" y="412.6" width="52.5" height="13.2" fill="#444444" />
<circle cx="906" cy="418.3" r="2.3" fill="none" stroke="#dcdcdc" stroke-width="1.2"/><path d="M907.6 420 L909.8 422.3" stroke="#dcdcdc" stroke-width="1.4"/>
<text x="912.4" y="422.6" font-size="7.6" fill="#d8d8d8" stroke="#d8d8d8" stroke-width="0.25" textLength="12.6" lengthAdjust="spacingAndGlyphs" >Kind</text>
<path d="M946.5 418.5 L948.7 420.7 L950.9 418.5" stroke="#8a8a8a" stroke-width="0.9" fill="none"/>
<rect x="959.3" y="416" width="8.3" height="7.6" fill="none" stroke="#cfcfcf" stroke-width="0.9"/><path d="M960.5 422.5 L962.5 419.5 L964 421 L965 420 L966.5 422.5Z" fill="#cfcfcf"/>
<circle cx="978.5" cy="419.8" r="3.6" fill="#cfcfcf"/><path d="M976 422.3 L981 417.3 A3.6 3.6 0 0 0 976 422.3Z" fill="#535353"/>
<text x="990.5" y="423.2" font-size="9.5" fill="#cfcfcf" stroke="#cfcfcf" stroke-width="0.25" textLength="7" lengthAdjust="spacingAndGlyphs" font-weight="bold" style="font-family:&quot;Liberation Serif&quot;" >T</text>
<rect x="1005.5" y="416.5" width="6.5" height="6.5" fill="none" stroke="#cfcfcf" stroke-width="0.9"/><g fill="#cfcfcf"><rect x="1004.5" y="415.5" width="2" height="2"/><rect x="1011" y="415.5" width="2" height="2"/><rect x="1004.5" y="422" width="2" height="2"/><rect x="1011" y="422" width="2" height="2"/></g>
<path d="M1022 415.5 H1025.5 L1028 418 V424 H1021.5 Z" fill="none" stroke="#cfcfcf" stroke-width="0.9"/><rect x="1021" y="420" width="4.5" height="4" fill="#cfcfcf"/>
<circle cx="1038" cy="415.8" r="2.8" fill="#e6e6e6"/><rect x="1037" y="418.5" width="2" height="4" fill="#3a3a3a"/>
<rect x="896" y="427.2" width="179" height="1.8" fill="#4a4a4a" />
<rect x="899.3" y="433" width="79.5" height="11.7" fill="#4e4e4e" />
<text x="904" y="441.8" font-size="7.6" fill="#6e6e6e" textLength="19" lengthAdjust="spacingAndGlyphs" >Normal</text>
<text x="983" y="442" font-size="7.6" fill="#6e6e6e" textLength="22" lengthAdjust="spacingAndGlyphs" >Opacity:</text>
<rect x="1009.6" y="435" width="20.4" height="8.5" fill="#4a4a4a" />
<text x="1011.5" y="442" font-size="7" fill="#6a6a6a" textLength="15" lengthAdjust="spacingAndGlyphs" >100%</text>
<rect x="1032" y="435" width="8" height="8.5" fill="#4e4e4e" />
<rect x="896" y="447" width="179" height="1.8" fill="#4a4a4a" />
<text x="899.3" y="461.8" font-size="7.6" fill="#6e6e6e" textLength="15.5" lengthAdjust="spacingAndGlyphs" >Lock:</text>
<g fill="#bdbdbd"><rect x="920" y="455" width="2" height="2"/><rect x="924" y="455" width="2" height="2"/><rect x="922" y="457" width="2" height="2"/><rect x="926" y="457" width="2" height="2"/><rect x="920" y="459" width="2" height="2"/><rect x="924" y="459" width="2" height="2"/><rect x="922" y="461" width="2" height="2"/><rect x="926" y="461" width="2" height="2"/></g>
<path d="M941.5 454.5 L936 461 M936.5 460 Q934.5 461 934.3 463.5 Q936.8 463 937.5 461Z" stroke="#a8a8a8" stroke-width="1.1" fill="#a8a8a8"/>
<g stroke="#a8a8a8" stroke-width="0.9" fill="none"><line x1="951" y1="454" x2="951" y2="464"/><line x1="946.5" y1="459" x2="955.5" y2="459"/></g>
<path d="M961.5 455.5 V463 H969 M963 457 H966.5 L968 459" stroke="#a8a8a8" stroke-width="0.9" fill="none"/>
<rect x="976.5" y="458.5" width="6.5" height="5" fill="#a8a8a8"/><path d="M977.8 458.5 V456.7 A2 2 0 0 1 981.8 456.7 V458.5" stroke="#a8a8a8" stroke-width="0.9" fill="none"/>
<text x="997" y="462" font-size="7.6" fill="#6e6e6e" textLength="9" lengthAdjust="spacingAndGlyphs" >Fill:</text>
<rect x="1010" y="455" width="20" height="8.5" fill="#4a4a4a" />
<text x="1011.5" y="462" font-size="7" fill="#6a6a6a" textLength="15" lengthAdjust="spacingAndGlyphs" >100%</text>
<rect x="1032" y="455" width="8" height="8.5" fill="#4e4e4e" />
<rect x="896" y="466.5" width="179" height="1" fill="#4a4a4a" />
<rect x="1066.2" y="469" width="8" height="236" fill="#4a4a4a" />
<rect x="1066.8" y="481" width="7" height="75" fill="#626262" />
<path d="M1068.5 475.5 L1070.5 473.5 L1072.5 475.5" stroke="#7a7a7a" stroke-width="0.8" fill="none"/>
<path d="M1068.5 697.5 L1070.5 699.5 L1072.5 697.5" stroke="#7a7a7a" stroke-width="0.8" fill="none"/>
<rect x="914.3" y="467" width="0.8" height="238" fill="#4e4e4e" />
<rect x="896" y="485.8" width="170" height="1.2" fill="#4a4a4a" />
<rect x="896" y="512.7" width="170" height="1.2" fill="#4a4a4a" />
<rect x="896" y="542" width="170" height="1.2" fill="#4a4a4a" />
<rect x="896" y="571.2" width="170" height="1.2" fill="#4a4a4a" />
<rect x="896" y="599.7" width="170" height="1.2" fill="#4a4a4a" />
<rect x="896" y="628.3" width="170" height="1.2" fill="#4a4a4a" />
<rect x="896" y="656.5" width="170" height="1.2" fill="#4a4a4a" />
<rect x="896" y="685.4" width="170" height="1.2" fill="#4a4a4a" />
<path d="M901.8 479.1 Q905.8 473.70000000000005 909.8 479.1 Q905.8 484.5 901.8 479.1Z" fill="none" stroke="#a6a6a6" stroke-width="1.2"/><circle cx="905.8" cy="479.1" r="1.7" fill="#a6a6a6"/>
<path d="M927 477 L929.2 479.2 L931.4 477" stroke="#8a8a8a" stroke-width="0.9" fill="none"/>
<path d="M935.5 475 H939 L940 476.3 H944.5 V482.5 H935.5 Z" fill="#e0e0e0"/><rect x="935.5" y="477.5" width="9" height="0.8" fill="#535353"/>
<text x="951" y="481.3" font-size="8" fill="#d8d8d8" stroke="#d8d8d8" stroke-width="0.25" textLength="25" lengthAdjust="spacingAndGlyphs" >edite text</text>
<path d="M901.8 501.4 Q905.8 496.0 909.8 501.4 Q905.8 506.79999999999995 901.8 501.4Z" fill="none" stroke="#a6a6a6" stroke-width="1.2"/><circle cx="905.8" cy="501.4" r="1.7" fill="#a6a6a6"/>
<text x="942.5" y="506.8" font-size="14" fill="#dedede" stroke="#dedede" stroke-width="0.25" textLength="9.8" lengthAdjust="spacingAndGlyphs" style="font-family:&quot;Liberation Serif&quot;" >T</text>
<text x="962.6" y="504.3" font-size="8" fill="#d8d8d8" stroke="#d8d8d8" stroke-width="0.25" textLength="20.8" lengthAdjust="spacingAndGlyphs" >Layer 2</text>
<path d="M901.8 529.8 Q905.8 524.4 909.8 529.8 Q905.8 535.1999999999999 901.8 529.8Z" fill="none" stroke="#a6a6a6" stroke-width="1.2"/><circle cx="905.8" cy="529.8" r="1.7" fill="#a6a6a6"/>
<defs><pattern id="chk2" x="937.6" y="518.8" width="4" height="4" patternUnits="userSpaceOnUse"><rect width="4" height="4" fill="#fff"/><rect x="2" width="2" height="2" fill="#d0d0d0"/><rect y="2" width="2" height="2" fill="#d0d0d0"/></pattern></defs>
<rect x="937.6" y="518.8" width="15.9" height="21.4" fill="url(#chk2)" />
<rect x="938.5" y="520.5" width="2.5" height="3" fill="#7a3a3a"/>
<text x="959" y="532.6" font-size="8" fill="#d8d8d8" stroke="#d8d8d8" stroke-width="0.25" textLength="20.8" lengthAdjust="spacingAndGlyphs" >Layer 3</text>
<path d="M901.8 558.2 Q905.8 552.8000000000001 909.8 558.2 Q905.8 563.6 901.8 558.2Z" fill="none" stroke="#a6a6a6" stroke-width="1.2"/><circle cx="905.8" cy="558.2" r="1.7" fill="#a6a6a6"/>
<text x="942.4" y="563.5" font-size="14" fill="#dedede" stroke="#dedede" stroke-width="0.25" textLength="9.8" lengthAdjust="spacingAndGlyphs" style="font-family:&quot;Liberation Serif&quot;" >T</text>
<text x="963" y="561.0" font-size="8" fill="#d8d8d8" stroke="#d8d8d8" stroke-width="0.25" textLength="82.4" lengthAdjust="spacingAndGlyphs" >citta0000000...&lt;&lt;&lt;&lt;&lt;&lt;&lt;&lt;&lt;&lt;0 d</text>
<rect x="902.5" y="583.6" width="6" height="7" fill="none" stroke="#606060" stroke-width="0.7"/>
<text x="942.4" y="592.4" font-size="14" fill="#dedede" stroke="#dedede" stroke-width="0.25" textLength="9.8" lengthAdjust="spacingAndGlyphs" style="font-family:&quot;Liberation Serif&quot;" >T</text>
<text x="963" y="589.9" font-size="8" fill="#d8d8d8" stroke="#d8d8d8" stroke-width="0.25" textLength="9.7" lengthAdjust="spacingAndGlyphs" >1aa</text>
<path d="M901.8 615.7 Q905.8 610.3000000000001 909.8 615.7 Q905.8 621.1 901.8 615.7Z" fill="none" stroke="#a6a6a6" stroke-width="1.2"/><circle cx="905.8" cy="615.7" r="1.7" fill="#a6a6a6"/>
<text x="942.4" y="621.0" font-size="14" fill="#dedede" stroke="#dedede" stroke-width="0.25" textLength="9.8" lengthAdjust="spacingAndGlyphs" style="font-family:&quot;Liberation Serif&quot;" >T</text>
<text x="963" y="618.5" font-size="8" fill="#d8d8d8" stroke="#d8d8d8" stroke-width="0.25" textLength="10" lengthAdjust="spacingAndGlyphs" >169</text>
<path d="M901.8 644.3 Q905.8 638.9 909.8 644.3 Q905.8 649.6999999999999 901.8 644.3Z" fill="none" stroke="#a6a6a6" stroke-width="1.2"/><circle cx="905.8" cy="644.3" r="1.7" fill="#a6a6a6"/>
<text x="942.4" y="649.5999999999999" font-size="14" fill="#dedede" stroke="#dedede" stroke-width="0.25" textLength="9.8" lengthAdjust="spacingAndGlyphs" style="font-family:&quot;Liberation Serif&quot;" >T</text>
<text x="963" y="647.0999999999999" font-size="8" fill="#d8d8d8" stroke="#d8d8d8" stroke-width="0.25" textLength="6" lengthAdjust="spacingAndGlyphs" >m</text>
<path d="M901.8 672.6 Q905.8 667.2 909.8 672.6 Q905.8 678.0 901.8 672.6Z" fill="none" stroke="#a6a6a6" stroke-width="1.2"/><circle cx="905.8" cy="672.6" r="1.7" fill="#a6a6a6"/>
<text x="942.4" y="677.9" font-size="14" fill="#dedede" stroke="#dedede" stroke-width="0.25" textLength="9.8" lengthAdjust="spacingAndGlyphs" style="font-family:&quot;Liberation Serif&quot;" >T</text>
<text x="963" y="675.4" font-size="8" fill="#d8d8d8" stroke="#d8d8d8" stroke-width="0.25" textLength="20" lengthAdjust="spacingAndGlyphs" >129 1 a</text>
<path d="M901.8 700.6 Q905.8 695.2 909.8 700.6 Q905.8 706.0 901.8 700.6Z" fill="none" stroke="#a6a6a6" stroke-width="1.2"/><circle cx="905.8" cy="700.6" r="1.7" fill="#a6a6a6"/>
<text x="942.4" y="705.9" font-size="14" fill="#dedede" stroke="#dedede" stroke-width="0.25" textLength="9.8" lengthAdjust="spacingAndGlyphs" style="font-family:&quot;Liberation Serif&quot;" >T</text>
<text x="963" y="703.4" font-size="8" fill="#d8d8d8" stroke="#d8d8d8" stroke-width="0.25" textLength="28.7" lengthAdjust="spacingAndGlyphs" >01.01.1990</text>
<rect x="896" y="705" width="179" height="15" fill="#535353" />
<rect x="896" y="705" width="170" height="0.8" fill="#474747" />
<g stroke="#9a9a9a" stroke-width="1" fill="none"><ellipse cx="951" cy="714" rx="3" ry="2"/><ellipse cx="955.5" cy="714" rx="3" ry="2"/></g>
<text x="967" y="717" font-size="8" fill="#9a9a9a" stroke="#9a9a9a" stroke-width="0.25" textLength="6" lengthAdjust="spacingAndGlyphs" font-style="italic">fx</text>
<rect x="982" y="710" width="9" height="8" fill="none" stroke="#c8c8c8" stroke-width="1"/><circle cx="986.5" cy="714" r="2.2" fill="#c8c8c8"/>
<circle cx="1003.5" cy="714" r="3.6" fill="#d0d0d0"/><path d="M1001 716.5 L1006 711.5 A3.6 3.6 0 0 0 1001 716.5Z" fill="#535353"/>
<path d="M1016 710.5 H1019.5 L1020.5 711.8 H1024.5 V718 H1016 Z" fill="#dcdcdc"/>
<rect x="1034" y="709.5" width="6.5" height="8.5" fill="none" stroke="#c8c8c8" stroke-width="0.9"/><path d="M1037.2 711.5 V716 M1035 713.8 H1039.5" stroke="#c8c8c8" stroke-width="0.9"/>
<path d="M1050.5 711 H1057 M1051.5 711.5 V718.5 H1056 V711.5 M1052.5 710.8 V709.5 H1055 V710.8" stroke="#9a9a9a" stroke-width="0.9" fill="none"/>
</svg></body></html>
